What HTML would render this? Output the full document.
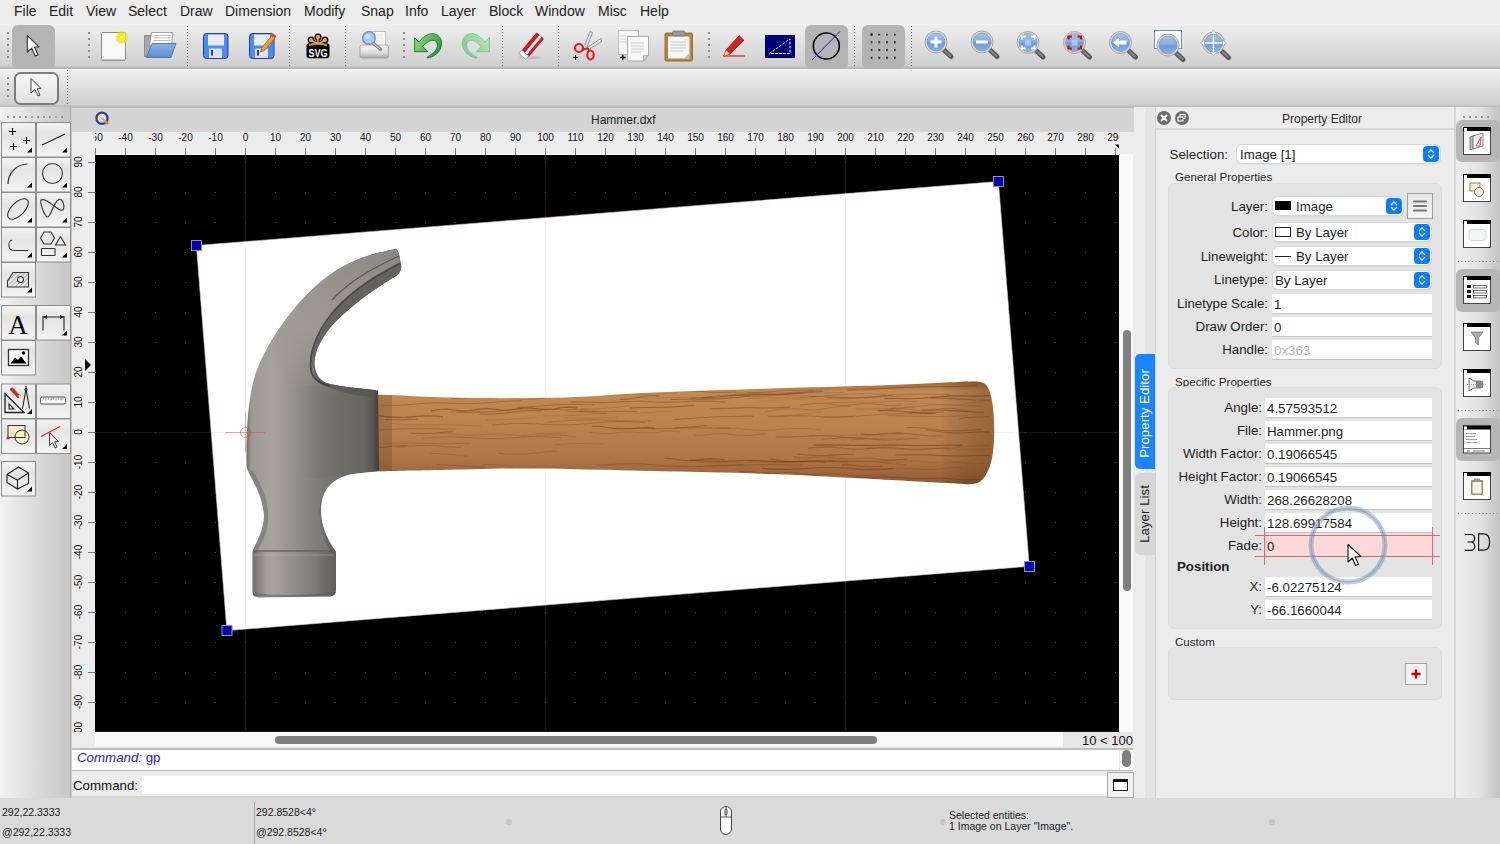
<!DOCTYPE html>
<html><head><meta charset="utf-8">
<style>
*{box-sizing:border-box;margin:0;padding:0}
html,body{width:1500px;height:844px;overflow:hidden;background:#ececec;font-family:"Liberation Sans",sans-serif;color:#1d1d1d;position:relative}
.a{position:absolute}
#menu{left:0;top:0;width:1500px;height:24px;background:#ececec}
#menu span{position:absolute;top:3px;font-size:14px;color:#222}
#tb1{left:0;top:24px;width:1500px;height:45px;background:linear-gradient(#f3f3f3 0,#f3f3f3 1px,#eeeeee 1px,#cfcfcf 42px,#b9b9b9 43px,#b9b9b9 45px)}
#tb2{left:0;top:69px;width:1500px;height:39px;background:linear-gradient(#f4f4f4 0,#f4f4f4 1px,#efefef 1px,#cdcdcd 36px,#bbbbbb 37px,#bbbbbb 39px)}
.sep{position:absolute;width:2px;background:radial-gradient(circle,#555 0.6px,transparent 0.9px) 0 0/2px 4px}
#pal{left:0;top:107px;width:70px;height:691px;background:linear-gradient(90deg,#f2f2f2,#c9c9c9)}
#palb{left:70px;top:107px;width:2px;height:691px;background:#bdbdbd}
#ctitle{left:72px;top:108px;width:1062px;height:24px;background:#d4d4d4;font-size:12px;line-height:24px;color:#222;padding-left:519px}
#rtop{left:72px;top:132px;width:1062px;height:23px;background:#ececec;overflow:hidden}
#rleft{left:72px;top:155px;width:23px;height:577px;background:#ececec;overflow:hidden}
#canvas{left:95px;top:155px;width:1024px;height:577px;background:#000;overflow:hidden}
#vscroll{left:1119px;top:155px;width:14px;height:577px;background:#f9f9f9}
#hscroll{left:95px;top:732px;width:968px;height:14px;background:#f9f9f9}
#zoomlbl{left:1063px;top:732px;width:70px;height:16px;background:#e6e6e6;font-size:13px;text-align:right;line-height:17px;color:#111}
#hist{left:72px;top:748px;width:1061px;height:23px;background:#fff;border-top:2px solid #bdbdbd;border-bottom:1px solid #b8b8b8}
#cmd{left:72px;top:771px;width:1061px;height:27px;background:#ececec}
#status{left:0;top:798px;width:1500px;height:46px;background:#dadada}
#rgap1{left:1134px;top:107px;width:11px;height:691px;background:#ececec}
#rgap2{left:1145px;top:107px;width:10px;height:691px;background:#e4e4e4}
#pe{left:1155px;top:107px;width:300px;height:691px;background:#ececec;border-left:1px solid #d0d0d0}
#rtb{left:1455px;top:107px;width:45px;height:691px;background:linear-gradient(90deg,#f0f0f0,#e6e6e6 60%,#c4c4c4)}
</style></head><body>
<div id="menu" class="a">
<span style="left:14px">File</span><span style="left:49px">Edit</span><span style="left:86px">View</span><span style="left:128px">Select</span><span style="left:180px">Draw</span><span style="left:225px">Dimension</span><span style="left:304px">Modify</span><span style="left:361px">Snap</span><span style="left:405px">Info</span><span style="left:441px">Layer</span><span style="left:489px">Block</span><span style="left:535px">Window</span><span style="left:598px">Misc</span><span style="left:640px">Help</span>
</div>
<div id="tb1" class="a"></div>
<div id="tb2" class="a"></div>
<svg class="a" style="left:0;top:24px" width="1500" height="84" viewBox="0 24 1500 84">
<defs>
<pattern id="hdots" x="7" y="32" width="6" height="6" patternUnits="userSpaceOnUse"><rect width="2" height="2" fill="#8a8a8a"/></pattern>
<pattern id="sdots" x="0" y="0" width="3" height="3" patternUnits="userSpaceOnUse"><rect width="1" height="1.4" fill="#6a6a6a"/></pattern>
<linearGradient id="lens" x1="0" y1="0" x2="0" y2="1"><stop offset="0" stop-color="#a8c2e8"/><stop offset="0.48" stop-color="#86aadf"/><stop offset="0.52" stop-color="#6a98d8"/><stop offset="1" stop-color="#80b4ee"/></linearGradient>
<radialGradient id="glow"><stop offset="0" stop-color="#fffff0"/><stop offset="0.3" stop-color="#f4ea20"/><stop offset="0.7" stop-color="#eee020" stop-opacity="0.8"/><stop offset="1" stop-color="#eee020" stop-opacity="0"/></radialGradient>
<linearGradient id="paper" x1="0" y1="0" x2="1" y2="1"><stop offset="0" stop-color="#fff"/><stop offset="1" stop-color="#dcdcdc"/></linearGradient>
<linearGradient id="fold" x1="0" y1="0" x2="0" y2="1"><stop offset="0" stop-color="#8ab4e4"/><stop offset="1" stop-color="#5a8ed4"/></linearGradient>
<linearGradient id="green" x1="0" y1="0" x2="1" y2="0.6"><stop offset="0" stop-color="#9ede80"/><stop offset="1" stop-color="#2a9a40"/></linearGradient>
<linearGradient id="lgreen" x1="0" y1="0" x2="1" y2="0.6"><stop offset="0" stop-color="#c0e8b8"/><stop offset="1" stop-color="#88c898"/></linearGradient>
<g id="mag"><path d="M8 8L15 14.5" stroke="#555" stroke-width="5" stroke-linecap="round"/><path d="M9 9L14.5 14" stroke="#8a8a8a" stroke-width="1.8" stroke-linecap="round"/><circle r="11" fill="#d8d8d0" stroke="#a8a8a0" stroke-width="1"/><circle r="9" fill="url(#lens)" stroke="#7090c0" stroke-width="0.6"/></g>
</defs>
<!-- toolbar 1 -->
<path d="M8.0 32.0V58.0" stroke="#8a8a8a" stroke-width="2" stroke-dasharray="2 4"/>
<rect x="12" y="25" width="43" height="44" rx="6" fill="#b4b4b4"/>
<path d="M27.3 35.7V52.2L31.8 48.2L35.3 56L38 54.8L34.6 47.3L39 46.8Z" fill="#fff" stroke="#333" stroke-width="1.1" stroke-linejoin="round"/>
<path d="M89.0 32.0V58.0" stroke="#8a8a8a" stroke-width="2" stroke-dasharray="2 4"/>
<!-- new -->
<rect x="101.5" y="32.5" width="24" height="27.5" rx="0.8" fill="#f8f8f8" stroke="#8c8c8c" stroke-width="1"/>
<path d="M102 60.5h23" stroke="#999" stroke-width="1"/>
<circle cx="121.8" cy="37.5" r="7" fill="url(#glow)"/>
<path d="M187.5 26.0V67.0" stroke="#6a6a6a" stroke-width="1" stroke-dasharray="1 2"/>
<!-- open -->
<path d="M144.5 35.5h8v21h-8z" fill="#a8a8a8" stroke="#777" stroke-width="0.7"/>
<path d="M151.5 32.5h21.5l-1.5 13h-22z" fill="#fbfbfb" stroke="#8a8a8a" stroke-width="0.8"/>
<path d="M154 35.5h17M153.5 38h17M153.5 40.5h17" stroke="#c0c0c0" stroke-width="1"/>
<path d="M152 43.5H176L171 57.5H146.5Z" fill="url(#fold)" stroke="#3a6ab0" stroke-width="0.8"/>
<!-- save -->
<g id="save"><rect x="203.5" y="33.5" width="24.5" height="25" rx="3" fill="#4c8cf0" stroke="#2a3aa0" stroke-width="1"/>
<rect x="208" y="34.5" width="16" height="11" fill="#e8ecf8"/>
<rect x="209" y="48.5" width="13" height="9.5" fill="#dde0e8"/><rect x="211" y="50" width="2" height="5.5" fill="#1a3ac8"/></g>
<use href="#save" x="46"/>
<path d="M272 35.5l3 2.5-10.5 12.5-4 1.5 1-4z" fill="#f6a020" stroke="#b05a10" stroke-width="0.8"/>
<path d="M272 35.5l3 2.5 1.5-1.8-3-2.5z" fill="#e04040"/>
<path d="M289.5 26.0V67.0" stroke="#6a6a6a" stroke-width="1" stroke-dasharray="1 2"/>
<!-- svg -->
<g stroke="#000" stroke-width="1.6">
<path d="M318 44L318 37M318 44L311 40M318 44L325 40M318 44L308 45M318 44L328 45" stroke-width="3.2"/>
<circle cx="318" cy="37" r="2.8" fill="#f5a623"/><circle cx="311" cy="40" r="2.6" fill="#f5a623"/><circle cx="325" cy="40" r="2.6" fill="#f5a623"/>
</g>
<path d="M306.5 45.5Q306.5 43.5 309 43.5H327Q329.5 43.5 329.5 45.5V55.5Q329.5 58.3 326.5 58.3H309.5Q306.5 58.3 306.5 55.5Z" fill="#000"/>
<path d="M309 45.3Q318 42 327 45.3" stroke="#f5a623" stroke-width="1.6" fill="none"/>
<path d="M318 44L318 37M318 44L311 40M318 44L325 40" stroke="#f5a623" stroke-width="1.6"/>
<circle cx="318" cy="37" r="2.1" fill="#f5a623"/><circle cx="311" cy="40" r="1.9" fill="#f5a623"/><circle cx="325" cy="40" r="1.9" fill="#f5a623"/>
<text x="318" y="57" font-size="11" font-weight="bold" fill="#fff" text-anchor="middle" font-family="Liberation Sans" textLength="19" lengthAdjust="spacingAndGlyphs">SVG</text>
<path d="M345.5 26.0V67.0" stroke="#6a6a6a" stroke-width="1" stroke-dasharray="1 2"/>
<!-- print preview -->
<linearGradient id="prg" x1="0" y1="0" x2="0" y2="1"><stop offset="0" stop-color="#f4f4f4"/><stop offset="0.6" stop-color="#dcdcdc"/><stop offset="1" stop-color="#a8a8a8"/></linearGradient>
<rect x="367.5" y="31.5" width="18" height="16" fill="#f8f8f8" stroke="#b4b4b4" stroke-width="0.8"/>
<path d="M370 35h13M370 38h13M370 41h13" stroke="#d8d8d8" stroke-width="0.8"/>
<path d="M362 45h24.5q2 0 2 2v9q0 2-2 2h-24.5q-2 0-2-2v-9q0-2 2-2z" fill="url(#prg)" stroke="#9a9a9a" stroke-width="0.8"/>
<path d="M362 49h24" stroke="#fff" stroke-width="0.8" opacity="0.7"/>
<path d="M372 42L380.5 49.5" stroke="#888" stroke-width="3.2" stroke-linecap="round"/>
<path d="M372.5 42.5L380 49" stroke="#ddd" stroke-width="1" stroke-linecap="round"/>
<circle cx="369" cy="38" r="6.3" fill="#a8c8ee" stroke="#6a8ec4" stroke-width="1.3"/>
<circle cx="367.5" cy="36.5" r="2.5" fill="#d4e4f8" opacity="0.8"/>
<path d="M404.0 32.0V58.0" stroke="#8a8a8a" stroke-width="2" stroke-dasharray="2 4"/>
<!-- undo -->
<path id="undo" d="M414.6 37.6L418.8 42.1C423 37 428 33.7 432 33.7C438 33.7 442 38 441.6 44C441 52 434 57.5 427 58L427.5 56.8C433 54 437.5 50 437.4 45C437.4 42 435.5 40.3 433 40.3C429 40.3 425.5 43.5 422.7 46.3L427.8 51.7L414.6 51.7Z" fill="url(#green)" stroke="#17782c" stroke-width="0.9" stroke-linejoin="round"/>
<!-- redo -->
<path d="M414.6 37.6L418.8 42.1C423 37 428 33.7 432 33.7C438 33.7 442 38 441.6 44C441 52 434 57.5 427 58L427.5 56.8C433 54 437.5 50 437.4 45C437.4 42 435.5 40.3 433 40.3C429 40.3 425.5 43.5 422.7 46.3L427.8 51.7L414.6 51.7Z" transform="translate(904 0) scale(-1 1)" fill="url(#lgreen)" stroke="#7cbf8a" stroke-width="0.9" stroke-linejoin="round"/>
<path d="M502.5 26.0V67.0" stroke="#6a6a6a" stroke-width="1" stroke-dasharray="1 2"/>
<!-- eraser -->
<ellipse cx="530" cy="57.5" rx="11" ry="1.6" fill="#aaa" opacity="0.5"/>
<path d="M536.5 33l7 5.8-14.5 17.5-7-5.8z" fill="#d81818" stroke="#901010" stroke-width="0.7"/>
<path d="M539.3 35.3l2.2 1.8-14.5 17.5-2.2-1.8z" fill="#fff"/>
<path d="M521.5 50l7.2 6-2.8 3.3-7.2-6z" fill="#f4f4f4" stroke="#888" stroke-width="0.7"/>
<path d="M558.5 26.0V67.0" stroke="#6a6a6a" stroke-width="1" stroke-dasharray="1 2"/>
<!-- cut -->
<path d="M585 45L590 31.5L592.5 32.5L587 47M588 47L601 38.5L601.5 41.5L589.5 49" fill="#eee" stroke="#777" stroke-width="0.8"/>
<circle cx="579" cy="48" r="4" fill="none" stroke="#e02020" stroke-width="2.2"/>
<ellipse cx="590.5" cy="55" rx="3.2" ry="4.5" fill="none" stroke="#e02020" stroke-width="2.2"/>
<path d="M582 50L588 48M589 51L588 48" stroke="#e02020" stroke-width="2"/>
<path d="M573 57.5h5M575.5 55v5" stroke="#000" stroke-width="1.2"/>
<!-- copy -->
<path d="M618.5 30.5h20v24h-20z" fill="#f6f6f6" stroke="#b0b0b0" stroke-width="0.8"/>
<path d="M620 36H630M620 39H630M620 42H630" stroke="#ccc" stroke-width="0.7"/>
<path d="M627.5 36.5h21v19l-5 5.5h-16z" fill="#f8f8f8" stroke="#999" stroke-width="0.8"/>
<path d="M648.5 55.5l-5 5.5v-5.5z" fill="#d0d0d0" stroke="#999" stroke-width="0.6"/>
<path d="M631 43h13M631 46h13M631 49h13M631 52h10" stroke="#c4c4c4" stroke-width="0.9"/>
<path d="M620 57.5h5.5M622.75 54.75v5.5" stroke="#000" stroke-width="1.3"/>
<!-- paste -->
<rect x="665" y="33" width="27.5" height="28" rx="1.5" fill="#b88440" stroke="#8a5a20" stroke-width="0.8"/>
<rect x="668" y="36.5" width="21.5" height="22" fill="#f6f6f6"/>
<path d="M671 42h15M671 45h15M671 48h15M671 51h12" stroke="#bbb" stroke-width="0.8"/>
<path d="M684 58.5l5.5-5.5v5.5z" fill="#bbb"/>
<rect x="672.5" y="31" width="12.5" height="5" rx="1.5" fill="#9a9a9a" stroke="#666" stroke-width="0.6"/>
<path d="M709.0 32.0V58.0" stroke="#8a8a8a" stroke-width="2" stroke-dasharray="2 4"/>
<!-- pencil -->
<path d="M723 56H745" stroke="#e01818" stroke-width="1.2"/>
<path d="M739.5 35.5l4.5 4.5-14 14-6 2 2-6z" fill="#d82020" stroke="#801010" stroke-width="0.8"/>
<path d="M739.5 35.5l4.5 4.5 1.2-1.2-4.5-4.5z" fill="#ddd"/>
<path d="M726 50l4 4-6 2z" fill="#f0c890"/>
<!-- blue rect -->
<rect x="765.5" y="35.5" width="29" height="22" fill="#00007a" stroke="#000040" stroke-width="1"/>
<path d="M769.5 53.5L790 39V53.5Z" fill="none" stroke="#fff" stroke-width="1" stroke-dasharray="2.5 1.5"/>
<!-- circle selected -->
<rect x="805" y="25" width="43" height="44" rx="6" fill="#b4b4b4"/>
<circle cx="826.3" cy="46" r="13" fill="none" stroke="#000" stroke-width="1.6"/>
<path d="M812 60L840 31.5" stroke="#1a1af0" stroke-width="1"/>
<path d="M854.5 26.0V67.0" stroke="#6a6a6a" stroke-width="1" stroke-dasharray="1 2"/>
<!-- grid selected -->
<rect x="862" y="25" width="43" height="44" rx="6" fill="#b4b4b4"/>
<g fill="#111"><rect x="870.5" y="33.5" width="2" height="2"/></g>
<pattern id="gdots" x="870.5" y="33.5" width="7.8" height="7.8" patternUnits="userSpaceOnUse"><rect width="1.8" height="1.8" fill="#111"/></pattern>
<rect x="870.5" y="33.5" width="26" height="26" fill="url(#gdots)"/>
<path d="M911.5 26.0V67.0" stroke="#6a6a6a" stroke-width="1" stroke-dasharray="1 2"/>
<!-- zoom in/out -->
<use href="#mag" x="936" y="42"/>
<path d="M930.5 42h11M936 36.5v11" stroke="#fff" stroke-width="3"/>
<use href="#mag" x="982" y="42"/>
<path d="M976 42h12" stroke="#fff" stroke-width="3"/>
<use href="#mag" x="1028" y="42.5"/>
<path d="M1022 39.5v-3h3.5M1031 36.5h3.5v3M1034.5 45.5v3h-3.5M1025.5 48.5h-3.5v-3" stroke="#fff" stroke-width="1.8" fill="none"/>
<rect x="1025" y="39.5" width="6" height="6" fill="#a8c8f0"/>
<use href="#mag" x="1074.5" y="42.5"/>
<path d="M1068.5 39.5v-3h3.5M1077.5 36.5h3.5v3M1081 45.5v3h-3.5M1072 48.5h-3.5v-3" stroke="#e00000" stroke-width="2.2" fill="none"/>
<rect x="1071.5" y="39.5" width="6" height="6" fill="#a8c8f0"/>
<use href="#mag" x="1120.5" y="42.5"/>
<path d="M1113 42.5l6-5v3h7.5v4h-7.5v3z" fill="#fff"/>
<rect x="1154.5" y="30.5" width="27" height="18" fill="#fff" stroke="#6a8ac8" stroke-width="1"/>
<use href="#mag" x="1168" y="45"/>
<use href="#mag" x="1213.5" y="43"/>
<path d="M1213.5 31v24M1201.5 43h24" stroke="#fff" stroke-width="1.5"/>
<path d="M1213.5 30l-3 4h6zM1213.5 56l-3-4h6zM1200.5 43l4-3v6zM1226.5 43l-4-3v6z" fill="#fff" stroke="#6a8ac8" stroke-width="0.5"/>
<!-- toolbar 2 -->
<path d="M8.0 77.0V97.0" stroke="#8a8a8a" stroke-width="2" stroke-dasharray="2 4"/>
<linearGradient id="b2g" x1="0" y1="0" x2="0" y2="1"><stop offset="0" stop-color="#f6f6f6"/><stop offset="0.5" stop-color="#ececec"/><stop offset="1" stop-color="#e0e0e0"/></linearGradient><rect x="15" y="73" width="43" height="31" rx="5.5" fill="url(#b2g)" stroke="#7c7c7c" stroke-width="2"/>
<path d="M31 78.5V93L35 89.5L38 96L40 95.2L37.2 88.8L41 88.5Z" fill="#fff" stroke="#444" stroke-width="1" stroke-linejoin="round"/>
<path d="M67.5 70.0V106.0" stroke="#6a6a6a" stroke-width="1" stroke-dasharray="1 2"/>
</svg>

<svg class="a" style="left:0;top:107px" width="72" height="691" viewBox="0 107 72 691"><defs><linearGradient id="pbtn" x1="0" y1="0" x2="0" y2="1"><stop offset="0" stop-color="#f4f4f4"/><stop offset="0.35" stop-color="#e4e4e4"/><stop offset="1" stop-color="#f4f4f4"/></linearGradient><linearGradient id="pbg" x1="0" y1="0" x2="1" y2="0"><stop offset="0" stop-color="#f2f2f2"/><stop offset="1" stop-color="#c6c6c6"/></linearGradient></defs><rect x="0" y="107" width="70" height="691" fill="url(#pbg)"/><rect x="70" y="107" width="2" height="691" fill="#c8c8c8"/><rect x="70" y="107" width="1" height="691" fill="#b4b4b4"/><path d="M7 117H64" stroke="#9a9a9a" stroke-width="2" stroke-dasharray="2 4"/><rect x="1.5" y="122.5" width="34" height="34.5" fill="url(#pbtn)" stroke="#8c8c8c" stroke-width="1"/><g transform="translate(1 122)"><path d="M8 9.5h7M11.5 6v7M22 18.5h7M25.5 15v7M9 24.5h7M12.5 21v7" stroke="#000" stroke-width="1.2"/></g><path d="M32 147.5V152.5H27Z" fill="#000"/><rect x="36.5" y="122.5" width="34" height="34.5" fill="url(#pbtn)" stroke="#8c8c8c" stroke-width="1"/><g transform="translate(36 122)"><path d="M6 23L29 12" stroke="#222" stroke-width="1.1"/></g><path d="M67 147.5V152.5H62Z" fill="#000"/><rect x="1.5" y="157.5" width="34" height="34.5" fill="url(#pbtn)" stroke="#8c8c8c" stroke-width="1"/><g transform="translate(1 157)"><path d="M7 27A20 20 0 0 1 26.5 7" stroke="#333" stroke-width="1.2" fill="none"/></g><path d="M32 182.5V187.5H27Z" fill="#000"/><rect x="36.5" y="157.5" width="34" height="34.5" fill="url(#pbtn)" stroke="#8c8c8c" stroke-width="1"/><g transform="translate(36 157)"><circle cx="16.5" cy="16.5" r="10" stroke="#333" stroke-width="1.1" fill="none"/></g><path d="M67 182.5V187.5H62Z" fill="#000"/><rect x="1.5" y="192.5" width="34" height="34.5" fill="url(#pbtn)" stroke="#8c8c8c" stroke-width="1"/><g transform="translate(1 192)"><ellipse cx="17" cy="17" rx="13" ry="6.5" transform="rotate(-45 17 17)" stroke="#333" stroke-width="1.1" fill="none"/></g><path d="M32 217.5V222.5H27Z" fill="#000"/><rect x="36.5" y="192.5" width="34" height="34.5" fill="url(#pbtn)" stroke="#8c8c8c" stroke-width="1"/><g transform="translate(36 192)"><path d="M5 8C9 6 14 11 18 14C22 17 26 20 27.5 17C29 13 26 6 23 7.5C20 9 18 13 16 18C14 23 12 27 10 24C7 20 4 11 5 8Z" stroke="#333" stroke-width="1.1" fill="none"/></g><path d="M67 217.5V222.5H62Z" fill="#000"/><rect x="1.5" y="227.5" width="34" height="34.5" fill="url(#pbtn)" stroke="#8c8c8c" stroke-width="1"/><g transform="translate(1 227)"><path d="M11 13A4 5 0 0 0 8 19A5 5 0 0 0 13 23.5H27" stroke="#333" stroke-width="1.1" fill="none"/></g><path d="M32 252.5V257.5H27Z" fill="#000"/><rect x="36.5" y="227.5" width="34" height="34.5" fill="url(#pbtn)" stroke="#8c8c8c" stroke-width="1"/><g transform="translate(36 227)"><path d="M8 5H15L18.5 11L15 17H8L4.5 11Z" stroke="#333" stroke-width="1.1" fill="none"/><path d="M24.5 9.5L29.5 18H19.5Z" stroke="#333" stroke-width="1.1" fill="none"/><rect x="5.5" y="21.5" width="13.5" height="7" rx="0.5" stroke="#333" stroke-width="1.1" fill="none"/></g><path d="M67 252.5V257.5H62Z" fill="#000"/><rect x="1.5" y="262.5" width="34" height="34.5" fill="url(#pbtn)" stroke="#8c8c8c" stroke-width="1"/><g transform="translate(1 262)"><defs><pattern id="hp" width="3" height="3" patternUnits="userSpaceOnUse" patternTransform="rotate(45)"><path d="M0 0V3" stroke="#555" stroke-width="0.8"/></pattern></defs><path d="M6.5 19L12 10.5H27.5V25H6.5Z" fill="url(#hp)" stroke="#333" stroke-width="1.1"/><circle cx="19.5" cy="17.5" r="3" fill="#eee" stroke="#333" stroke-width="1.1"/></g><path d="M32 287.5V292.5H27Z" fill="#000"/><rect x="1.5" y="305.5" width="34" height="34.5" fill="url(#pbtn)" stroke="#8c8c8c" stroke-width="1"/><g transform="translate(1 305)"><text x="17" y="29" font-family="Liberation Serif" font-size="27" text-anchor="middle" fill="#000">A</text></g><rect x="36.5" y="305.5" width="34" height="34.5" fill="url(#pbtn)" stroke="#8c8c8c" stroke-width="1"/><g transform="translate(36 305)"><path d="M7 11V25.5M28 11V25.5M7 12H28" stroke="#222" stroke-width="1.1"/><path d="M7 12l4-2v4zM28 12l-4-2v4z" fill="#222"/></g><path d="M67 330.5V335.5H62Z" fill="#000"/><rect x="1.5" y="340.5" width="34" height="34.5" fill="url(#pbtn)" stroke="#8c8c8c" stroke-width="1"/><g transform="translate(1 340)"><rect x="7.5" y="9.5" width="20" height="16" fill="#fff" stroke="#333" stroke-width="1.3"/><path d="M9.5 23.5L14 17.5L17 20L20 16.5L25.5 23.5Z" fill="#000"/><circle cx="22.5" cy="13" r="1.8" fill="#000"/></g><rect x="1.5" y="384.0" width="34" height="34.5" fill="url(#pbtn)" stroke="#8c8c8c" stroke-width="1"/><g transform="translate(1 383.5)"><path d="M4 10V29H23Z" fill="none" stroke="#222" stroke-width="1.3"/><path d="M8 20.5V25.5H13Z" fill="none" stroke="#222" stroke-width="1.1"/><path d="M9 6l2.2-2 8 8.5-2.2 2z" fill="#e02020" stroke="#801010" stroke-width="0.5"/><path d="M17 12.5l2.2-2 0.8 4.5z" fill="#f0c890"/><path d="M25 2.5V5.5M25 5.5L21.5 25M25 5.5L28.5 25" stroke="#222" stroke-width="1.1" fill="none"/><circle cx="25" cy="6" r="1.3" fill="none" stroke="#222"/></g><path d="M32 409.0V414.0H27Z" fill="#000"/><rect x="36.5" y="384.0" width="34" height="34.5" fill="url(#pbtn)" stroke="#8c8c8c" stroke-width="1"/><g transform="translate(36 383.5)"><rect x="4.5" y="13.5" width="25" height="7" rx="1.5" fill="#f8f8f8" stroke="#555" stroke-width="1"/><path d="M7.5 14V16M10 14V17M12.5 14V16M15 14V17M17.5 14V16M20 14V17M22.5 14V16M25 14V17M27 14V16" stroke="#555" stroke-width="0.6"/></g><rect x="1.5" y="419.0" width="34" height="34.5" fill="url(#pbtn)" stroke="#8c8c8c" stroke-width="1"/><g transform="translate(1 418.5)"><circle cx="21" cy="18.5" r="7" fill="#f8f0c8"/><rect x="7" y="7" width="17" height="12" fill="#f8f0c8"/><circle cx="21" cy="18.5" r="7" fill="none" stroke="#333" stroke-width="1"/><rect x="7" y="7" width="17" height="12" fill="none" stroke="#333" stroke-width="1"/><circle cx="7" cy="19.5" r="1.6" fill="#f02020"/></g><rect x="36.5" y="419.0" width="34" height="34.5" fill="url(#pbtn)" stroke="#8c8c8c" stroke-width="1"/><g transform="translate(36 418.5)"><path d="M5 18L24 8" stroke="#e82020" stroke-width="1.1"/><path d="M13.5 14V27L16.5 24L19 29.5L21 28.5L18.7 23.3L22.5 23Z" fill="#eee" stroke="#333" stroke-width="0.9" stroke-linejoin="round"/></g><path d="M67 444.0V449.0H62Z" fill="#000"/><rect x="1.5" y="461.5" width="34" height="34.5" fill="url(#pbtn)" stroke="#8c8c8c" stroke-width="1"/><g transform="translate(1 461)"><path d="M6 13.5L17.5 6L27.5 12V22.5L16.5 28L6 21.5Z" fill="none" stroke="#222" stroke-width="1.1"/><path d="M6 13.5L16.5 19L27.5 12M16.5 19V28" stroke="#222" stroke-width="1.1" fill="none"/></g><path d="M32 486.5V491.5H27Z" fill="#000"/></svg>
<div id="ctitle" class="a">Hammer.dxf</div>
<svg class="a" style="left:94px;top:110px" width="18" height="18"><defs><radialGradient id="dg" cx="0.4" cy="0.35"><stop offset="0" stop-color="#fff"/><stop offset="1" stop-color="#c8d0e0"/></radialGradient></defs><circle cx="8" cy="8.3" r="5.6" fill="url(#dg)" stroke="#2a4090" stroke-width="2.2"/><path d="M5 6.5L8 8.5M8 4.5V8.5" stroke="#d06060" stroke-width="0.5"/><path d="M8 8L13 13" stroke="#e8b020" stroke-width="2.2"/><path d="M12.5 12.5L14 14" stroke="#e06060" stroke-width="2"/></svg>
<svg class="a" style="left:72px;top:132px" width="1062" height="23" viewBox="72 132 1062 23"><rect x="72" y="132" width="1062" height="23" fill="#ececec"/><rect x="95" y="154" width="1039" height="1" fill="#f8f8f8"/><path d="M95.5 148V155M125.5 148V155M155.5 148V155M185.5 148V155M215.5 148V155M245.5 148V155M275.5 148V155M305.5 148V155M335.5 148V155M365.5 148V155M395.5 148V155M425.5 148V155M455.5 148V155M485.5 148V155M515.5 148V155M545.5 148V155M575.5 148V155M605.5 148V155M635.5 148V155M665.5 148V155M695.5 148V155M725.5 148V155M755.5 148V155M785.5 148V155M815.5 148V155M845.5 148V155M875.5 148V155M905.5 148V155M935.5 148V155M965.5 148V155M995.5 148V155M1025.5 148V155M1055.5 148V155M1085.5 148V155M1115.5 148V155" stroke="#7a7a7a" stroke-width="1"/><svg x="95" y="132" width="1024" height="23" viewBox="95 132 1024 23"><g font-size="10" text-anchor="middle" fill="#111"><text x="95.5" y="141">-50</text><text x="125.5" y="141">-40</text><text x="155.5" y="141">-30</text><text x="185.5" y="141">-20</text><text x="215.5" y="141">-10</text><text x="245.5" y="141">0</text><text x="275.5" y="141">10</text><text x="305.5" y="141">20</text><text x="335.5" y="141">30</text><text x="365.5" y="141">40</text><text x="395.5" y="141">50</text><text x="425.5" y="141">60</text><text x="455.5" y="141">70</text><text x="485.5" y="141">80</text><text x="515.5" y="141">90</text><text x="545.5" y="141">100</text><text x="575.5" y="141">110</text><text x="605.5" y="141">120</text><text x="635.5" y="141">130</text><text x="665.5" y="141">140</text><text x="695.5" y="141">150</text><text x="725.5" y="141">160</text><text x="755.5" y="141">170</text><text x="785.5" y="141">180</text><text x="815.5" y="141">190</text><text x="845.5" y="141">200</text><text x="875.5" y="141">210</text><text x="905.5" y="141">220</text><text x="935.5" y="141">230</text><text x="965.5" y="141">240</text><text x="995.5" y="141">250</text><text x="1025.5" y="141">260</text><text x="1055.5" y="141">270</text><text x="1085.5" y="141">280</text><text x="1115.5" y="141">290</text></g></svg><path d="M1115.5 148V155" stroke="#7a7a7a"/><path d="M1115 144.5h4v4z" fill="#111"/></svg>
<svg class="a" style="left:72px;top:155px" width="23" height="577" viewBox="72 155 23 577"><rect x="72" y="155" width="23" height="577" fill="#ececec"/><path d="M88 732.5H95M88 702.5H95M88 672.5H95M88 642.5H95M88 612.5H95M88 582.5H95M88 552.5H95M88 522.5H95M88 492.5H95M88 462.5H95M88 432.5H95M88 402.5H95M88 372.5H95M88 342.5H95M88 312.5H95M88 282.5H95M88 252.5H95M88 222.5H95M88 192.5H95M88 162.5H95" stroke="#7a7a7a" stroke-width="1"/><g font-size="10" text-anchor="middle" fill="#111"><text transform="translate(82 732) rotate(-90)" y="0">-100</text><text transform="translate(82 702) rotate(-90)" y="0">-90</text><text transform="translate(82 672) rotate(-90)" y="0">-80</text><text transform="translate(82 642) rotate(-90)" y="0">-70</text><text transform="translate(82 612) rotate(-90)" y="0">-60</text><text transform="translate(82 582) rotate(-90)" y="0">-50</text><text transform="translate(82 552) rotate(-90)" y="0">-40</text><text transform="translate(82 522) rotate(-90)" y="0">-30</text><text transform="translate(82 492) rotate(-90)" y="0">-20</text><text transform="translate(82 462) rotate(-90)" y="0">-10</text><text transform="translate(82 432) rotate(-90)" y="0">0</text><text transform="translate(82 402) rotate(-90)" y="0">10</text><text transform="translate(82 372) rotate(-90)" y="0">20</text><text transform="translate(82 342) rotate(-90)" y="0">30</text><text transform="translate(82 312) rotate(-90)" y="0">40</text><text transform="translate(82 282) rotate(-90)" y="0">50</text><text transform="translate(82 252) rotate(-90)" y="0">60</text><text transform="translate(82 222) rotate(-90)" y="0">70</text><text transform="translate(82 192) rotate(-90)" y="0">80</text><text transform="translate(82 162) rotate(-90)" y="0">90</text></g><path d="M85 359v12l6-6z" fill="#111"/></svg>

<svg class="a" style="left:95px;top:155px" width="1024" height="577" viewBox="95 155 1024 577">
<defs>
<pattern id="dots" x="5" y="12" width="30" height="30" patternUnits="userSpaceOnUse"><rect x="0" y="0" width="1" height="1" fill="#444"/></pattern>
<linearGradient id="metal" x1="246" y1="0" x2="380" y2="0" gradientUnits="userSpaceOnUse">
<stop offset="0" stop-color="#6a6964"/><stop offset="0.04" stop-color="#9c9a93"/><stop offset="0.2" stop-color="#a6a49d"/><stop offset="0.4" stop-color="#8e8c86"/><stop offset="0.6" stop-color="#797772"/><stop offset="0.9" stop-color="#6e6d68"/><stop offset="1" stop-color="#4a4945"/></linearGradient>
<linearGradient id="clawg" x1="260" y1="390" x2="400" y2="250" gradientUnits="userSpaceOnUse">
<stop offset="0" stop-color="#a4a29b"/><stop offset="0.5" stop-color="#9a9891"/><stop offset="1" stop-color="#8a8882"/></linearGradient>
<linearGradient id="wood" x1="0" y1="381" x2="0" y2="484" gradientUnits="userSpaceOnUse">
<stop offset="0" stop-color="#9a6638"/><stop offset="0.1" stop-color="#c08a56"/><stop offset="0.4" stop-color="#bd8250"/><stop offset="0.75" stop-color="#b07645"/><stop offset="0.95" stop-color="#976038"/><stop offset="1" stop-color="#875532"/></linearGradient>
<linearGradient id="capg" x1="940" y1="0" x2="994" y2="0" gradientUnits="userSpaceOnUse">
<stop offset="0" stop-color="#000" stop-opacity="0"/><stop offset="1" stop-color="#5a3010" stop-opacity="0.35"/></linearGradient>
<linearGradient id="blk" x1="300" y1="0" x2="380" y2="0" gradientUnits="userSpaceOnUse"><stop offset="0" stop-color="#55544f" stop-opacity="0"/><stop offset="0.5" stop-color="#55544f" stop-opacity="0.2"/><stop offset="0.9" stop-color="#45443f" stop-opacity="0.25"/><stop offset="1" stop-color="#33322f" stop-opacity="0.6"/></linearGradient>
<linearGradient id="lft" x1="240" y1="0" x2="275" y2="0" gradientUnits="userSpaceOnUse"><stop offset="0" stop-color="#3a3936" stop-opacity="0.45"/><stop offset="1" stop-color="#3a3936" stop-opacity="0"/></linearGradient>
<linearGradient id="facel" x1="252" y1="0" x2="336" y2="0" gradientUnits="userSpaceOnUse"><stop offset="0" stop-color="#3a3936" stop-opacity="0.45"/><stop offset="0.18" stop-color="#3a3936" stop-opacity="0"/><stop offset="0.75" stop-color="#3a3936" stop-opacity="0.05"/><stop offset="1" stop-color="#3a3936" stop-opacity="0.35"/></linearGradient>
</defs>
<rect x="95" y="155" width="1024" height="577" fill="#000"/>
<path d="M245.5 155V732M545.5 155V732M845.5 155V732M95 432.5H1119M95 731.5H1119" stroke="#161616" stroke-width="1.5"/>
<rect x="95" y="155" width="1024" height="577" fill="url(#dots)"/>
<path d="M196.4 245.5L998.4 181.5L1029.3 566.3L226.9 630.6Z" fill="#fff" stroke="#e8c8c8" stroke-width="0.6"/>
<path d="M245.5 246V631M545.5 222V607M845.5 198V583M199 432.5H1014" stroke="#000" stroke-opacity="0.05" stroke-width="1"/>
<path d="M372 395C380.0 394.4 402.7 395.8 420.0 396.5C437.3 397.2 451.8 397.8 476.0 398.0C500.2 398.2 535.3 398.4 565.0 397.5C594.7 396.6 619.5 394.0 654.0 392.5C688.5 391.0 732.5 389.8 772.0 388.5C811.5 387.2 858.5 386.2 891.0 385.0C923.5 383.8 954.3 382.1 967.0 381.5C970.2 382.2 982.0 379.9 986.5 385.6C991.0 391.3 992.8 403.4 993.7 415.5C994.6 427.6 994.3 447.0 992.0 458.0C989.7 469.0 985.5 477.3 980.0 481.6C974.5 485.9 962.2 483.4 958.7 483.7C947.4 483.1 922.1 481.6 891.0 480.0C859.9 478.4 811.5 475.5 772.0 474.0C732.5 472.5 693.5 471.9 654.0 471.0C614.5 470.1 570.7 468.7 535.0 468.5C499.3 468.3 467.2 469.5 440.0 470.0C412.8 470.5 383.3 471.2 372.0 471.5Z" fill="url(#wood)"/>
<g clip-path="url(#hclip)"><path d="M554.3 445.1 L561.4 444.3 L568.5 443.8 L575.6 443.6 L582.6 443.6 L589.7 443.8 L596.8 443.9 L603.9 443.6" stroke="#7a4216" stroke-width="1.0" fill="none" opacity="0.26"/><path d="M620.2 399.5 L628.0 399.1 L635.8 397.8 L643.6 396.3 L651.5 395.7 L659.3 396.0" stroke="#7a4216" stroke-width="1.0" fill="none" opacity="0.58"/><path d="M706.3 473.4 L713.7 473.7 L721.1 474.4 L728.5 475.1 L735.9 475.4 L743.3 475.0 L750.8 474.2 L758.2 473.4 L765.6 473.0 L773.0 473.2 L780.4 473.9 L787.8 474.6" stroke="#7a4216" stroke-width="0.7" fill="none" opacity="0.36"/><path d="M849.7 440.3 L857.3 439.6 L865.0 439.0 L872.6 438.5 L880.2 438.4 L887.9 438.3 L895.5 438.4 L903.2 438.3" stroke="#7a4216" stroke-width="0.6" fill="none" opacity="0.32"/><path d="M768.2 416.6 L776.0 416.7 L783.8 416.4 L791.6 416.0 L799.4 415.6 L807.1 415.7 L814.9 416.2 L822.7 416.9 L830.5 417.3 L838.3 417.4 L846.0 417.0 L853.8 416.6" stroke="#7a4216" stroke-width="1.1" fill="none" opacity="0.34"/><path d="M704.7 466.2 L712.2 466.1 L719.8 465.9 L727.3 465.7 L734.9 465.4 L742.5 465.1 L750.0 464.8 L757.6 464.6 L765.1 464.5 L772.7 464.6 L780.3 464.7 L787.8 464.8 L795.4 465.0 L802.9 465.2" stroke="#7a4216" stroke-width="0.9" fill="none" opacity="0.51"/><path d="M451.2 398.8 L459.0 398.5 L466.8 398.0 L474.6 397.4 L482.4 397.1 L490.2 397.0 L498.0 397.3 L505.8 397.9 L513.6 398.5 L521.4 399.0 L529.2 399.1 L537.0 398.9 L544.8 398.4" stroke="#7a4216" stroke-width="0.8" fill="none" opacity="0.49"/><path d="M716.6 428.1 L724.1 427.8 L731.7 428.0 L739.2 428.6 L746.7 429.4 L754.3 430.1 L761.8 430.4 L769.3 430.2 L776.8 429.7 L784.4 429.0 L791.9 428.4 L799.4 428.3 L807.0 428.6 L814.5 429.3 L822.0 430.0" stroke="#7a4216" stroke-width="0.6" fill="none" opacity="0.50"/><path d="M748.3 461.1 L756.2 461.4 L764.2 461.7 L772.1 462.0 L780.1 462.0 L788.1 461.8 L796.0 461.4 L804.0 461.0 L811.9 460.7 L819.9 460.5 L827.8 460.5 L835.8 460.7 L843.7 461.0 L851.7 461.3 L859.6 461.5 L867.6 461.5 L875.6 461.3 L883.5 460.9 L891.5 460.5 L899.4 460.2 L907.4 460.0" stroke="#7a4216" stroke-width="0.9" fill="none" opacity="0.31"/><path d="M430.3 453.4 L437.8 453.6 L445.3 454.0 L452.9 454.6 L460.4 455.4 L467.9 456.3" stroke="#7a4216" stroke-width="0.7" fill="none" opacity="0.41"/><path d="M689.7 460.1 L697.3 460.4 L704.9 460.9 L712.5 461.2 L720.2 461.3 L727.8 461.1 L735.4 460.8 L743.0 460.5 L750.6 460.4 L758.3 460.5 L765.9 460.9 L773.5 461.3 L781.1 461.6 L788.8 461.7 L796.4 461.6 L804.0 461.3 L811.6 461.0 L819.3 460.9 L826.9 461.0 L834.5 461.3" stroke="#7a4216" stroke-width="1.2" fill="none" opacity="0.59"/><path d="M450.6 411.9 L458.1 411.8 L465.7 411.9 L473.2 412.0 L480.8 412.0 L488.3 411.9 L495.9 411.5 L503.5 410.9" stroke="#7a4216" stroke-width="0.6" fill="none" opacity="0.40"/><path d="M581.6 469.5 L589.5 469.7 L597.5 470.1 L605.5 470.7 L613.4 471.4 L621.4 472.0 L629.4 472.3 L637.3 472.4 L645.3 472.3 L653.3 472.1 L661.3 471.9 L669.2 471.9 L677.2 472.2 L685.2 472.8" stroke="#7a4216" stroke-width="0.6" fill="none" opacity="0.56"/><path d="M828.0 459.9 L836.0 460.7 L843.9 461.2 L851.9 461.0 L859.9 460.5 L867.9 460.3 L875.9 460.8 L883.9 461.6 L891.8 462.0 L899.8 461.8 L907.8 461.3 L915.8 461.1 L923.8 461.6 L931.8 462.4 L939.7 462.8 L947.7 462.6 L955.7 462.0 L963.7 461.9 L971.7 462.5" stroke="#7a4216" stroke-width="0.6" fill="none" opacity="0.27"/><path d="M485.3 420.4 L492.6 419.9 L499.9 419.7 L507.2 419.6 L514.5 419.3 L521.8 418.8 L529.1 418.2 L536.4 417.6" stroke="#7a4216" stroke-width="0.9" fill="none" opacity="0.26"/><path d="M884.6 398.5 L892.1 398.4 L899.7 398.5 L907.2 398.6 L914.7 398.5 L922.2 398.2 L929.8 397.6 L937.3 396.9 L944.8 396.3 L952.4 395.9 L959.9 395.9 L967.4 396.0 L974.9 396.1 L982.5 396.0 L990.0 395.6" stroke="#7a4216" stroke-width="1.2" fill="none" opacity="0.60"/><path d="M639.6 397.9 L647.3 398.4 L655.1 398.5 L662.8 398.2 L670.6 397.7 L678.3 397.4 L686.0 397.4 L693.8 397.7 L701.5 398.3 L709.3 398.6 L717.0 398.5 L724.8 398.1 L732.5 397.6" stroke="#7a4216" stroke-width="0.7" fill="none" opacity="0.26"/><path d="M930.6 397.9 L938.0 398.1 L945.4 398.3 L952.9 398.7 L960.3 399.1 L967.7 399.5 L975.1 399.9 L982.6 400.1 L990.0 400.2" stroke="#7a4216" stroke-width="1.2" fill="none" opacity="0.49"/><path d="M516.7 407.4 L524.4 407.1 L532.2 406.6 L540.0 406.1 L547.7 405.4 L555.5 404.9 L563.3 404.5 L571.0 404.3 L578.8 404.3 L586.6 404.5 L594.3 404.7" stroke="#7a4216" stroke-width="0.8" fill="none" opacity="0.53"/><path d="M951.0 461.6 L958.8 462.4 L966.6 463.3 L974.4 463.8 L982.2 463.6 L990.0 462.9" stroke="#7a4216" stroke-width="0.8" fill="none" opacity="0.26"/><path d="M376.8 415.4 L384.1 416.3 L391.5 417.0 L398.9 417.3 L406.2 417.2 L413.6 416.7 L421.0 416.2 L428.3 415.9 L435.7 416.1 L443.1 416.8" stroke="#7a4216" stroke-width="1.3" fill="none" opacity="0.58"/><path d="M578.8 410.9 L586.1 411.2 L593.4 411.4 L600.8 411.5 L608.1 411.5 L615.4 411.4 L622.8 411.4 L630.1 411.5 L637.4 411.7" stroke="#7a4216" stroke-width="1.2" fill="none" opacity="0.42"/><path d="M751.8 395.0 L759.7 394.5 L767.5 394.3 L775.4 394.4 L783.3 394.8 L791.2 395.3 L799.1 395.8 L806.9 396.1 L814.8 396.2 L822.7 396.0 L830.6 395.5 L838.5 394.9 L846.3 394.2 L854.2 393.8 L862.1 393.6 L870.0 393.7 L877.9 394.0 L885.7 394.5" stroke="#7a4216" stroke-width="0.9" fill="none" opacity="0.31"/><path d="M833.5 461.2 L840.8 461.6 L848.1 461.6 L855.4 461.6 L862.8 461.5 L870.1 461.7 L877.4 462.2 L884.7 462.9 L892.1 463.7 L899.4 464.4 L906.7 464.8" stroke="#7a4216" stroke-width="1.1" fill="none" opacity="0.31"/><path d="M436.2 464.3 L443.3 464.8 L450.4 465.2 L457.5 465.5 L464.6 465.9 L471.7 466.2 L478.8 466.6 L485.9 467.2" stroke="#7a4216" stroke-width="1.1" fill="none" opacity="0.37"/><path d="M689.2 390.3 L697.0 391.1 L704.9 391.8 L712.7 392.3 L720.5 392.4 L728.4 392.3 L736.2 392.0" stroke="#7a4216" stroke-width="0.9" fill="none" opacity="0.56"/><path d="M855.7 408.8 L862.9 408.8 L870.1 408.8 L877.2 408.8 L884.4 408.7 L891.6 408.4 L898.8 408.0 L905.9 407.5 L913.1 407.0" stroke="#7a4216" stroke-width="0.9" fill="none" opacity="0.30"/><path d="M906.0 427.7 L913.6 427.6 L921.2 428.0 L928.8 428.8 L936.4 429.8 L944.0 430.6 L951.6 431.0 L959.2 430.8 L966.8 430.3 L974.4 429.8 L982.0 429.7" stroke="#7a4216" stroke-width="1.0" fill="none" opacity="0.44"/><path d="M674.1 428.0 L680.6 427.6 L687.1 427.1 L693.6 426.6 L700.0 426.1 L706.5 425.5" stroke="#7a4216" stroke-width="0.9" fill="none" opacity="0.50"/><path d="M693.9 435.3 L701.1 435.3 L708.4 434.6 L715.6 433.8 L722.8 433.6 L730.1 434.2 L737.3 435.2 L744.5 435.6 L751.8 435.3 L759.0 434.4 L766.3 433.8" stroke="#7a4216" stroke-width="0.8" fill="none" opacity="0.35"/><path d="M823.4 439.3 L830.7 438.8 L838.1 438.1 L845.5 437.6 L852.9 437.5 L860.3 437.8 L867.7 438.5 L875.1 439.3 L882.4 439.9 L889.8 440.0 L897.2 439.7 L904.6 439.1 L912.0 438.5 L919.4 438.1" stroke="#7a4216" stroke-width="1.0" fill="none" opacity="0.43"/><path d="M775.6 436.8 L783.0 437.0 L790.4 437.0 L797.8 436.7 L805.2 436.3 L812.6 435.9 L820.0 435.8 L827.4 435.9 L834.8 436.3 L842.2 437.0 L849.6 437.8 L857.0 438.5 L864.4 439.1" stroke="#7a4216" stroke-width="1.3" fill="none" opacity="0.34"/><path d="M695.7 462.3 L703.3 462.5 L711.0 462.7 L718.6 462.8 L726.2 462.6 L733.9 462.4 L741.5 462.1 L749.1 461.9 L756.8 461.8 L764.4 462.0 L772.0 462.2 L779.7 462.4 L787.3 462.5 L794.9 462.4 L802.5 462.2 L810.2 461.9 L817.8 461.7 L825.4 461.6 L833.1 461.6 L840.7 461.9 L848.3 462.1" stroke="#7a4216" stroke-width="0.8" fill="none" opacity="0.28"/><path d="M761.7 468.3 L769.4 468.9 L777.2 469.2 L785.0 469.4 L792.7 469.2 L800.5 468.8 L808.2 468.3 L816.0 467.8 L823.8 467.5 L831.5 467.5 L839.3 467.8 L847.0 468.2 L854.8 468.8 L862.6 469.2 L870.3 469.3 L878.1 469.2 L885.8 468.8 L893.6 468.3" stroke="#7a4216" stroke-width="1.2" fill="none" opacity="0.59"/><path d="M491.8 425.2 L499.4 424.5 L507.1 423.9 L514.8 423.5 L522.5 423.4 L530.2 423.6 L537.9 423.9 L545.6 424.4 L553.3 424.7 L561.0 424.9 L568.7 424.9 L576.4 424.5 L584.0 423.9 L591.7 423.2 L599.4 422.5 L607.1 421.9 L614.8 421.6 L622.5 421.6 L630.2 421.8 L637.9 422.2 L645.6 422.6" stroke="#7a4216" stroke-width="0.9" fill="none" opacity="0.43"/><path d="M563.5 418.0 L571.4 418.0 L579.3 418.1 L587.2 418.1 L595.2 418.0 L603.1 417.8 L611.0 417.5 L618.9 417.2" stroke="#7a4216" stroke-width="0.6" fill="none" opacity="0.37"/><path d="M734.4 393.1 L741.8 392.9 L749.2 392.9 L756.6 393.0 L764.1 393.1 L771.5 393.1 L778.9 393.0 L786.4 392.8 L793.8 392.3 L801.2 391.7 L808.7 391.0 L816.1 390.2 L823.5 389.5 L831.0 388.9" stroke="#7a4216" stroke-width="0.8" fill="none" opacity="0.26"/><path d="M827.4 397.7 L834.6 397.9 L841.9 398.2 L849.1 398.3 L856.4 398.2 L863.6 397.9 L870.8 397.4 L878.1 396.7 L885.3 395.9 L892.6 395.1" stroke="#7a4216" stroke-width="0.7" fill="none" opacity="0.57"/><path d="M702.4 397.6 L709.9 397.5 L717.5 397.1 L725.1 396.3 L732.6 395.4 L740.2 394.6 L747.8 394.2 L755.3 394.2 L762.9 394.4 L770.4 394.7 L778.0 394.8 L785.6 394.4 L793.1 393.7 L800.7 392.8 L808.3 392.0 L815.8 391.5 L823.4 391.3" stroke="#7a4216" stroke-width="1.3" fill="none" opacity="0.47"/><path d="M841.0 464.8 L847.8 465.0 L854.6 465.5 L861.4 466.1 L868.2 466.5 L875.0 466.6 L881.9 466.4" stroke="#7a4216" stroke-width="1.0" fill="none" opacity="0.57"/><path d="M520.7 435.5 L528.5 434.7 L536.3 433.9 L544.1 433.5 L551.9 433.4 L559.7 433.3 L567.5 432.9" stroke="#7a4216" stroke-width="0.7" fill="none" opacity="0.36"/><path d="M543.0 416.0 L550.6 416.0 L558.1 416.0 L565.7 415.8 L573.3 415.4 L580.9 414.8 L588.4 414.3 L596.0 413.9 L603.6 413.8 L611.2 413.9 L618.7 413.9 L626.3 413.8 L633.9 413.5 L641.4 413.0 L649.0 412.4 L656.6 411.9 L664.2 411.7 L671.7 411.7" stroke="#7a4216" stroke-width="0.8" fill="none" opacity="0.26"/><path d="M799.8 405.2 L807.7 404.3 L815.5 403.4 L823.3 403.3 L831.1 404.3 L838.9 405.3 L846.8 405.5 L854.6 404.6 L862.4 403.6 L870.2 403.5 L878.0 404.4 L885.8 405.5 L893.7 405.7 L901.5 404.9" stroke="#7a4216" stroke-width="0.9" fill="none" opacity="0.42"/><path d="M860.8 434.1 L868.1 434.6 L875.5 434.5 L882.9 433.9 L890.3 433.3 L897.6 432.9 L905.0 433.2 L912.4 434.0 L919.8 435.0 L927.1 435.8 L934.5 436.1 L941.9 435.8" stroke="#7a4216" stroke-width="1.1" fill="none" opacity="0.47"/><path d="M602.8 395.6 L610.3 395.3 L617.9 395.0 L625.4 394.9 L632.9 394.8 L640.4 394.6 L647.9 394.4 L655.4 394.2 L663.0 393.8 L670.5 393.4 L678.0 392.9" stroke="#7a4216" stroke-width="0.7" fill="none" opacity="0.28"/><path d="M864.8 448.5 L872.6 448.2 L880.4 448.3 L888.2 448.6 L896.1 449.1 L903.9 449.3 L911.7 449.3 L919.6 449.0 L927.4 448.6 L935.2 448.4 L943.0 448.6 L950.9 449.0 L958.7 449.4 L966.5 449.6 L974.3 449.5 L982.2 449.1 L990.0 448.8" stroke="#7a4216" stroke-width="0.7" fill="none" opacity="0.41"/><path d="M517.9 471.0 L525.7 470.9 L533.4 470.8 L541.2 470.6 L549.0 470.5 L556.7 470.5 L564.5 470.6 L572.2 470.8 L580.0 471.1 L587.7 471.4 L595.5 471.7 L603.2 472.0 L611.0 472.2 L618.7 472.3 L626.5 472.2 L634.2 472.1 L642.0 472.0 L649.7 471.9 L657.5 471.8 L665.2 471.8 L673.0 471.9" stroke="#7a4216" stroke-width="0.8" fill="none" opacity="0.25"/><path d="M589.0 432.5 L596.6 433.0 L604.3 433.6 L611.9 433.4 L619.5 432.5 L627.2 431.8 L634.8 432.1 L642.5 432.8 L650.1 432.9 L657.8 432.1 L665.4 431.2 L673.0 431.3 L680.7 432.0" stroke="#7a4216" stroke-width="0.7" fill="none" opacity="0.39"/><path d="M385.0 419.6 L391.6 419.8 L398.2 419.8 L404.8 419.6 L411.3 419.4 L417.9 419.3" stroke="#7a4216" stroke-width="1.1" fill="none" opacity="0.50"/><path d="M887.5 415.5 L894.8 415.6 L902.1 415.8 L909.4 416.0 L916.8 416.3 L924.1 416.4 L931.4 416.5 L938.8 416.4 L946.1 416.3 L953.4 416.1 L960.8 415.9 L968.1 415.8" stroke="#7a4216" stroke-width="0.6" fill="none" opacity="0.54"/><path d="M895.2 455.0 L903.1 454.8 L911.0 454.7 L918.9 454.7 L926.8 454.9 L934.7 455.3 L942.6 455.6 L950.5 455.8 L958.4 455.9 L966.3 455.8 L974.2 455.6 L982.1 455.4 L990.0 455.4" stroke="#7a4216" stroke-width="1.2" fill="none" opacity="0.53"/><path d="M855.8 469.1 L863.4 469.8 L871.0 470.2 L878.5 470.1 L886.1 469.4 L893.7 468.5 L901.2 468.1 L908.8 468.3 L916.4 468.9 L923.9 469.5 L931.5 469.6 L939.1 469.1 L946.6 468.2 L954.2 467.6 L961.8 467.5" stroke="#7a4216" stroke-width="0.7" fill="none" opacity="0.38"/><path d="M422.9 437.9 L430.7 437.4 L438.4 437.0 L446.1 436.8 L453.8 436.8 L461.5 437.1 L469.2 437.5 L476.9 438.0 L484.6 438.4 L492.3 438.5 L500.0 438.4 L507.7 438.1 L515.4 437.6 L523.1 437.2 L530.8 436.9 L538.5 436.8 L546.2 437.0 L553.9 437.4 L561.6 437.9" stroke="#7a4216" stroke-width="0.6" fill="none" opacity="0.53"/><path d="M809.0 435.9 L816.9 435.6 L824.9 435.3 L832.8 435.2 L840.8 435.1 L848.7 435.1 L856.7 435.2 L864.6 435.2 L872.6 435.2 L880.5 435.2 L888.4 435.0 L896.4 434.7 L904.3 434.4" stroke="#7a4216" stroke-width="0.7" fill="none" opacity="0.34"/><path d="M797.6 454.2 L804.7 454.8 L811.8 455.2 L818.9 455.5 L825.9 455.4 L833.0 455.1 L840.1 454.7 L847.2 454.3 L854.3 454.3" stroke="#7a4216" stroke-width="1.1" fill="none" opacity="0.52"/><path d="M730.2 395.6 L737.8 395.6 L745.3 395.4 L752.9 395.1 L760.5 394.7 L768.0 394.2 L775.6 393.8 L783.2 393.3 L790.7 393.0 L798.3 392.8 L805.9 392.8 L813.5 392.8 L821.0 392.8 L828.6 392.8 L836.2 392.7 L843.7 392.4" stroke="#7a4216" stroke-width="1.0" fill="none" opacity="0.25"/><path d="M396.4 446.9 L403.6 446.7 L410.8 446.1 L418.0 445.6 L425.3 445.3 L432.5 445.5 L439.7 446.2 L446.9 446.9 L454.1 447.3 L461.3 447.3" stroke="#7a4216" stroke-width="0.9" fill="none" opacity="0.41"/><path d="M431.1 410.9 L438.8 409.5 L446.5 409.1 L454.2 410.0 L461.9 410.9 L469.6 410.7 L477.3 409.3 L485.0 408.4 L492.6 408.9 L500.3 410.0 L508.0 410.3 L515.7 409.2 L523.4 407.9 L531.1 407.9 L538.8 409.0 L546.5 409.7 L554.2 409.0 L561.9 407.6 L569.6 407.1 L577.3 407.9" stroke="#7a4216" stroke-width="1.2" fill="none" opacity="0.59"/><path d="M629.7 408.0 L636.9 407.7 L644.1 407.6 L651.3 407.5 L658.5 407.4 L665.7 407.2 L673.0 406.9 L680.2 406.5 L687.4 405.9 L694.6 405.3" stroke="#7a4216" stroke-width="1.0" fill="none" opacity="0.58"/><path d="M439.6 432.9 L447.2 433.2 L454.7 433.9 L462.3 434.8 L469.9 435.3 L477.5 435.1 L485.1 434.5 L492.7 434.0 L500.3 433.9 L507.9 434.5 L515.5 435.4 L523.1 436.1 L530.6 436.2 L538.2 435.7 L545.8 435.1 L553.4 434.8 L561.0 435.1 L568.6 436.0 L576.2 436.8" stroke="#7a4216" stroke-width="0.9" fill="none" opacity="0.26"/><path d="M362.2 429.6 L370.0 429.8 L377.8 429.9 L385.6 429.7 L393.5 429.4 L401.3 428.9 L409.1 428.6 L416.9 428.5 L424.8 428.6 L432.6 428.7 L440.4 428.9 L448.2 428.8 L456.1 428.5" stroke="#7a4216" stroke-width="1.2" fill="none" opacity="0.25"/><path d="M810.4 396.8 L818.2 396.7 L825.9 396.9 L833.6 397.1 L841.3 397.3 L849.1 397.4 L856.8 397.4 L864.5 397.1 L872.3 396.7 L880.0 396.1 L887.7 395.4 L895.4 394.8 L903.2 394.4 L910.9 394.1 L918.6 394.0 L926.3 394.1 L934.1 394.3 L941.8 394.5 L949.5 394.7" stroke="#7a4216" stroke-width="0.9" fill="none" opacity="0.39"/><path d="M959.3 418.6 L967.0 417.6 L974.6 417.1 L982.3 417.0 L990.0 416.7" stroke="#7a4216" stroke-width="1.2" fill="none" opacity="0.35"/><path d="M921.4 410.0 L929.2 409.9 L937.0 409.9 L944.8 410.1 L952.6 410.6 L960.4 411.2 L968.2 411.7 L976.0 412.1 L983.8 412.2" stroke="#7a4216" stroke-width="1.2" fill="none" opacity="0.53"/><path d="M738.5 471.8 L746.4 471.2 L754.2 471.8 L762.0 473.0 L769.9 473.7 L777.7 473.4 L785.5 472.6 L793.3 472.5 L801.2 473.5 L809.0 474.6 L816.8 474.9 L824.7 474.2 L832.5 473.6 L840.3 474.0 L848.1 475.2 L856.0 476.1 L863.8 475.8 L871.6 475.0 L879.5 474.8 L887.3 475.7" stroke="#7a4216" stroke-width="0.9" fill="none" opacity="0.51"/><path d="M746.7 392.8 L754.2 392.6 L761.6 392.3 L769.1 391.8 L776.6 391.3 L784.0 390.8 L791.5 390.5 L799.0 390.3 L806.4 390.3 L813.9 390.3" stroke="#7a4216" stroke-width="0.8" fill="none" opacity="0.51"/><path d="M945.8 448.5 L953.1 447.9 L960.5 447.1 L967.9 446.3 L975.3 445.8 L982.6 445.6 L990.0 445.7" stroke="#7a4216" stroke-width="0.7" fill="none" opacity="0.32"/><path d="M903.6 405.4 L911.4 404.4 L919.3 403.8 L927.1 403.8 L935.0 404.3 L942.9 404.8 L950.7 405.0 L958.6 404.7 L966.4 403.8 L974.3 402.7 L982.1 401.7 L990.0 401.1" stroke="#7a4216" stroke-width="0.7" fill="none" opacity="0.28"/><path d="M565.2 411.0 L572.1 411.3 L579.1 411.7 L586.1 412.2 L593.1 412.7 L600.0 413.2 L607.0 413.5" stroke="#7a4216" stroke-width="0.9" fill="none" opacity="0.39"/><path d="M674.5 419.4 L682.4 419.0 L690.3 418.4 L698.2 417.9 L706.1 417.4 L714.0 416.9 L721.9 416.6 L729.8 416.4 L737.7 416.3 L745.6 416.2 L753.5 416.2" stroke="#7a4216" stroke-width="1.0" fill="none" opacity="0.47"/><path d="M877.7 410.6 L885.0 410.5 L892.2 410.7 L899.5 411.1 L906.8 411.8 L914.0 412.4 L921.3 413.0 L928.5 413.3 L935.8 413.3" stroke="#7a4216" stroke-width="1.2" fill="none" opacity="0.56"/><path d="M373.1 448.6 L379.9 447.7 L386.8 446.9 L393.6 446.2 L400.4 445.8 L407.3 445.5" stroke="#7a4216" stroke-width="0.9" fill="none" opacity="0.57"/><path d="M855.4 477.2 L863.3 477.5 L871.2 477.5 L879.1 477.3 L887.0 477.2 L895.0 477.4 L902.9 477.9 L910.8 478.4 L918.7 478.6 L926.6 478.5 L934.6 478.3 L942.5 478.3 L950.4 478.7 L958.3 479.3 L966.2 479.6 L974.2 479.6 L982.1 479.3 L990.0 479.3" stroke="#7a4216" stroke-width="1.1" fill="none" opacity="0.58"/><path d="M793.0 456.8 L800.7 457.7 L808.3 457.9 L815.9 457.3 L823.5 456.9 L831.1 457.3 L838.7 458.3 L846.3 459.0 L853.9 458.8 L861.5 458.1 L869.1 458.0 L876.8 458.7 L884.4 459.7 L892.0 460.1 L899.6 459.6 L907.2 459.0" stroke="#7a4216" stroke-width="0.8" fill="none" opacity="0.57"/><path d="M747.3 398.8 L755.0 398.3 L762.7 398.0 L770.5 397.9 L778.2 398.0 L785.9 398.0 L793.6 397.9 L801.4 397.6 L809.1 397.1 L816.8 396.3" stroke="#7a4216" stroke-width="0.6" fill="none" opacity="0.43"/><path d="M709.7 408.9 L717.0 408.7 L724.4 408.4 L731.7 408.1 L739.0 407.8 L746.3 407.7 L753.6 407.7 L760.9 407.8 L768.2 407.9 L775.6 407.8 L782.9 407.5 L790.2 407.2" stroke="#7a4216" stroke-width="1.3" fill="none" opacity="0.48"/><path d="M890.3 408.4 L897.9 408.2 L905.6 407.6 L913.2 406.9 L920.9 406.1 L928.5 405.4 L936.2 404.9 L943.8 404.8 L951.5 405.0 L959.1 405.3 L966.8 405.7 L974.4 406.0 L982.1 406.1" stroke="#7a4216" stroke-width="0.6" fill="none" opacity="0.42"/><path d="M764.7 411.8 L772.4 410.6 L780.1 409.4 L787.8 408.7 L795.4 408.8 L803.1 409.4 L810.8 409.8 L818.5 409.5 L826.2 408.5 L833.9 407.2 L841.6 406.3 L849.3 406.2" stroke="#7a4216" stroke-width="0.8" fill="none" opacity="0.40"/><path d="M769.5 459.0 L777.5 460.2 L785.5 461.2 L793.4 461.7 L801.4 461.6 L809.4 461.5 L817.3 461.7 L825.3 462.6" stroke="#7a4216" stroke-width="0.8" fill="none" opacity="0.54"/><path d="M498.5 453.3 L505.8 453.8 L513.2 454.2 L520.5 454.2 L527.9 453.8 L535.2 453.1 L542.6 452.2 L549.9 451.5 L557.3 451.1" stroke="#7a4216" stroke-width="0.8" fill="none" opacity="0.40"/><path d="M759.2 401.2 L766.8 400.8 L774.5 400.4 L782.2 399.9 L789.8 399.6 L797.5 399.3 L805.2 399.1 L812.8 399.0 L820.5 399.0 L828.2 399.0 L835.8 398.9 L843.5 398.8 L851.2 398.6 L858.8 398.4 L866.5 398.0 L874.2 397.5 L881.8 397.1 L889.5 396.7 L897.2 396.3 L904.8 396.0 L912.5 395.8" stroke="#7a4216" stroke-width="0.6" fill="none" opacity="0.27"/><path d="M596.0 465.4 L603.7 465.0 L611.4 464.5 L619.2 464.1 L626.9 463.9 L634.6 463.8 L642.3 464.1 L650.1 464.5 L657.8 465.1 L665.5 465.7 L673.2 466.2 L681.0 466.5 L688.7 466.7 L696.4 466.5 L704.1 466.2 L711.9 465.7 L719.6 465.2 L727.3 464.9 L735.0 464.7 L742.8 464.7" stroke="#7a4216" stroke-width="0.7" fill="none" opacity="0.58"/><path d="M807.8 448.3 L814.6 448.1 L821.4 447.5 L828.3 446.8 L835.1 446.0 L841.9 445.4" stroke="#7a4216" stroke-width="0.6" fill="none" opacity="0.35"/><path d="M570.9 401.8 L578.6 401.8 L586.3 402.1 L594.0 402.4 L601.7 402.6 L609.4 402.5 L617.1 402.1 L624.9 401.7 L632.6 401.5 L640.3 401.4 L648.0 401.7 L655.7 402.0 L663.4 402.2 L671.1 402.2 L678.8 402.0 L686.5 401.6 L694.3 401.2 L702.0 401.1 L709.7 401.2 L717.4 401.5 L725.1 401.8" stroke="#7a4216" stroke-width="1.2" fill="none" opacity="0.40"/><path d="M389.6 423.5 L397.2 423.9 L404.8 424.4 L412.4 424.7 L420.1 424.8 L427.7 424.7 L435.3 424.5 L443.0 424.4 L450.6 424.5 L458.2 424.9 L465.8 425.4 L473.5 425.8 L481.1 426.1" stroke="#7a4216" stroke-width="0.6" fill="none" opacity="0.39"/><path d="M847.1 389.9 L854.7 389.7 L862.3 389.5 L870.0 389.1 L877.6 388.8 L885.2 388.4 L892.9 388.0 L900.5 387.6 L908.1 387.3 L915.7 387.0 L923.4 386.9 L931.0 386.8 L938.6 386.7 L946.3 386.6 L953.9 386.5 L961.5 386.3 L969.1 386.0 L976.8 385.6" stroke="#7a4216" stroke-width="1.1" fill="none" opacity="0.56"/><path d="M563.4 469.8 L570.7 470.1 L578.0 470.3 L585.2 470.6 L592.5 470.8 L599.8 470.8 L607.0 470.8 L614.3 470.6 L621.6 470.3 L628.8 470.1" stroke="#7a4216" stroke-width="0.8" fill="none" opacity="0.25"/><path d="M813.4 445.2 L821.2 445.0 L829.1 444.8 L836.9 444.8 L844.8 445.0 L852.6 445.3 L860.5 445.5 L868.3 445.5 L876.2 445.3 L884.0 445.0 L891.9 444.9 L899.7 445.1 L907.6 445.4 L915.4 445.6 L923.3 445.7 L931.1 445.5 L939.0 445.3 L946.8 445.1 L954.7 445.2 L962.5 445.5" stroke="#7a4216" stroke-width="1.3" fill="none" opacity="0.58"/><path d="M591.9 426.1 L599.7 426.4 L607.6 427.5 L615.4 428.6 L623.2 429.0 L631.1 428.6 L638.9 427.7 L646.7 427.4 L654.5 427.9" stroke="#7a4216" stroke-width="1.1" fill="none" opacity="0.54"/><path d="M823.7 416.7 L831.5 416.8 L839.2 416.7 L847.0 416.6 L854.8 416.2 L862.6 415.8 L870.4 415.2 L878.2 414.6 L885.9 414.2 L893.7 413.8 L901.5 413.7 L909.3 413.6 L917.1 413.7 L924.8 413.7 L932.6 413.7" stroke="#7a4216" stroke-width="0.7" fill="none" opacity="0.51"/><path d="M508.4 396.8 L516.1 397.1 L523.8 397.3 L531.4 397.3 L539.1 397.4 L546.8 397.4" stroke="#7a4216" stroke-width="1.3" fill="none" opacity="0.34"/><path d="M410.4 433.0 L417.5 433.4 L424.6 433.6 L431.7 433.4 L438.8 432.8 L445.9 432.2 L453.0 431.8" stroke="#7a4216" stroke-width="1.0" fill="none" opacity="0.49"/><path d="M808.8 448.0 L816.6 447.2 L824.4 446.9 L832.1 447.1 L839.9 447.9 L847.7 448.8 L855.5 449.2 L863.3 449.0 L871.1 448.3 L878.8 447.6 L886.6 447.4 L894.4 447.8 L902.2 448.6 L910.0 449.5 L917.8 449.8 L925.5 449.4 L933.3 448.7 L941.1 448.1 L948.9 447.9" stroke="#7a4216" stroke-width="0.9" fill="none" opacity="0.51"/><path d="M479.5 414.0 L487.3 414.1 L495.1 413.9 L502.8 413.3 L510.6 412.4 L518.4 411.6 L526.1 410.9 L533.9 410.7 L541.7 410.8" stroke="#7a4216" stroke-width="0.9" fill="none" opacity="0.60"/><path d="M664.4 458.1 L671.9 458.6 L679.4 459.8 L686.9 460.7 L694.4 460.5 L701.9 459.4 L709.5 458.6 L717.0 458.8 L724.5 459.9" stroke="#7a4216" stroke-width="1.2" fill="none" opacity="0.54"/><path d="M908.6 412.6 L915.7 412.5 L922.7 412.3 L929.8 412.3 L936.8 412.3 L943.9 412.4" stroke="#7a4216" stroke-width="1.3" fill="none" opacity="0.38"/><path d="M879.7 410.8 L887.0 409.9 L894.4 408.8 L901.8 408.5 L909.1 409.2 L916.5 410.2 L923.9 410.7 L931.2 410.1 L938.6 409.0 L946.0 408.3 L953.3 408.6 L960.7 409.6 L968.1 410.4" stroke="#7a4216" stroke-width="1.0" fill="none" opacity="0.33"/><path d="M581.2 408.9 L588.1 408.9 L595.0 408.8 L602.0 408.4 L608.9 407.9 L615.8 407.2 L622.7 406.4 L629.6 405.7" stroke="#7a4216" stroke-width="0.6" fill="none" opacity="0.36"/><path d="M767.0 415.7 L774.7 415.9 L782.4 415.8 L790.2 415.4 L797.9 414.7 L805.6 413.7 L813.3 412.6 L821.1 411.7" stroke="#7a4216" stroke-width="0.7" fill="none" opacity="0.39"/><path d="M690.1 398.2 L697.6 397.9 L705.2 397.3 L712.7 396.4 L720.2 395.7 L727.8 395.2 L735.3 395.2 L742.9 395.6 L750.4 395.9 L757.9 396.1 L765.5 395.9 L773.0 395.3 L780.6 394.4 L788.1 393.6 L795.6 393.2 L803.2 393.1" stroke="#7a4216" stroke-width="0.8" fill="none" opacity="0.58"/><path d="M547.4 422.1 L555.4 421.5 L563.4 420.9 L571.3 420.4 L579.3 420.0 L587.3 419.8 L595.3 419.8 L603.2 420.1 L611.2 420.4 L619.2 420.7 L627.1 421.0 L635.1 421.2 L643.1 421.1 L651.1 420.8" stroke="#7a4216" stroke-width="0.7" fill="none" opacity="0.50"/><path d="M482.2 464.6 L489.9 464.6 L497.6 464.8 L505.3 465.5 L513.0 466.7" stroke="#7a4216" stroke-width="0.9" fill="none" opacity="0.31"/><path d="M368.9 443.9 L376.7 443.7 L384.5 443.5 L392.4 443.2 L400.2 443.1 L408.0 443.1 L415.8 443.1 L423.7 443.3 L431.5 443.5 L439.3 443.7 L447.1 443.7 L455.0 443.6 L462.8 443.4 L470.6 443.1" stroke="#7a4216" stroke-width="1.0" fill="none" opacity="0.30"/><path d="M530.0 466.6 L537.5 466.7 L545.0 467.0 L552.5 467.5 L560.1 468.1 L567.6 468.8 L575.1 469.5 L582.6 470.1 L590.1 470.5 L597.7 470.8 L605.2 471.0 L612.7 471.0 L620.2 471.0 L627.7 471.0" stroke="#7a4216" stroke-width="0.7" fill="none" opacity="0.29"/><path d="M925.8 429.8 L933.0 430.7 L940.1 431.7 L947.2 432.5 L954.4 433.0 L961.5 433.0 L968.6 432.6 L975.7 432.1 L982.9 431.8 L990.0 432.0" stroke="#7a4216" stroke-width="1.0" fill="none" opacity="0.54"/><path d="M456.2 412.2 L463.9 412.4 L471.7 412.4 L479.5 412.2 L487.3 411.7 L495.0 411.1 L502.8 410.3 L510.6 409.6 L518.4 409.1 L526.1 408.8 L533.9 408.8 L541.7 409.0 L549.5 409.3 L557.2 409.5 L565.0 409.7 L572.8 409.6 L580.5 409.3 L588.3 408.8" stroke="#7a4216" stroke-width="0.8" fill="none" opacity="0.39"/><path d="M670.7 399.5 L678.7 399.2 L686.7 399.2 L694.7 399.2 L702.7 399.2 L710.7 399.1 L718.7 398.9 L726.6 398.4 L734.6 397.7 L742.6 396.9 L750.6 396.0" stroke="#7a4216" stroke-width="1.0" fill="none" opacity="0.52"/><path d="M382.9 405.8 L390.6 405.7 L398.3 405.4 L406.0 404.8 L413.8 404.2 L421.5 403.5 L429.2 403.1 L436.9 402.9 L444.6 403.0 L452.4 403.2 L460.1 403.5 L467.8 403.6 L475.5 403.5 L483.2 403.1 L491.0 402.5 L498.7 401.9 L506.4 401.3 L514.1 400.9 L521.8 400.7" stroke="#7a4216" stroke-width="0.9" fill="none" opacity="0.45"/><path d="M615.4 428.2 L623.2 428.3 L630.9 428.4 L638.6 428.6 L646.3 428.6 L654.0 428.6 L661.7 428.5 L669.4 428.3 L677.1 428.1 L684.8 427.9 L692.5 427.8 L700.3 427.8 L708.0 428.0 L715.7 428.1 L723.4 428.2 L731.1 428.3" stroke="#7a4216" stroke-width="0.8" fill="none" opacity="0.52"/><path d="M828.0 403.2 L835.4 402.7 L842.9 402.3 L850.4 402.1 L857.8 402.2 L865.3 402.4 L872.8 402.4 L880.2 402.0 L887.7 401.5 L895.2 401.2 L902.6 401.2 L910.1 401.4 L917.6 401.5" stroke="#7a4216" stroke-width="0.7" fill="none" opacity="0.40"/></g>
<clipPath id="hclip"><path d="M372 395C380.0 394.4 402.7 395.8 420.0 396.5C437.3 397.2 451.8 397.8 476.0 398.0C500.2 398.2 535.3 398.4 565.0 397.5C594.7 396.6 619.5 394.0 654.0 392.5C688.5 391.0 732.5 389.8 772.0 388.5C811.5 387.2 858.5 386.2 891.0 385.0C923.5 383.8 954.3 382.1 967.0 381.5C970.2 382.2 982.0 379.9 986.5 385.6C991.0 391.3 992.8 403.4 993.7 415.5C994.6 427.6 994.3 447.0 992.0 458.0C989.7 469.0 985.5 477.3 980.0 481.6C974.5 485.9 962.2 483.4 958.7 483.7C947.4 483.1 922.1 481.6 891.0 480.0C859.9 478.4 811.5 475.5 772.0 474.0C732.5 472.5 693.5 471.9 654.0 471.0C614.5 470.1 570.7 468.7 535.0 468.5C499.3 468.3 467.2 469.5 440.0 470.0C412.8 470.5 383.3 471.2 372.0 471.5Z"/></clipPath>
<path d="M372 395C380.0 394.4 402.7 395.8 420.0 396.5C437.3 397.2 451.8 397.8 476.0 398.0C500.2 398.2 535.3 398.4 565.0 397.5C594.7 396.6 619.5 394.0 654.0 392.5C688.5 391.0 732.5 389.8 772.0 388.5C811.5 387.2 858.5 386.2 891.0 385.0C923.5 383.8 954.3 382.1 967.0 381.5C970.2 382.2 982.0 379.9 986.5 385.6C991.0 391.3 992.8 403.4 993.7 415.5C994.6 427.6 994.3 447.0 992.0 458.0C989.7 469.0 985.5 477.3 980.0 481.6C974.5 485.9 962.2 483.4 958.7 483.7C947.4 483.1 922.1 481.6 891.0 480.0C859.9 478.4 811.5 475.5 772.0 474.0C732.5 472.5 693.5 471.9 654.0 471.0C614.5 470.1 570.7 468.7 535.0 468.5C499.3 468.3 467.2 469.5 440.0 470.0C412.8 470.5 383.3 471.2 372.0 471.5Z" fill="url(#capg)"/>
<rect x="378" y="390" width="14" height="86" fill="#5a3a20" opacity="0.25" clip-path="url(#hclip)"/>
<path d="M396 249C390.4 250.4 373.8 253.2 362.7 257.5C351.6 261.8 340.2 267.3 329.5 275.0C318.8 282.7 308.2 292.8 298.7 303.5C289.2 314.2 279.7 327.5 272.6 339.0C265.5 350.5 259.9 361.4 256.0 372.5C252.1 383.6 250.6 394.6 249.0 405.9C247.4 417.1 247.0 429.8 246.6 440.0C246.2 450.2 246.5 462.5 246.5 467.0L246.5 467C250 478 262 492 264 515C264 533 254 545 252.5 552L252.5 591Q252.5 597.5 259 597.5L330 596.5Q336 596 336 590L336 552C332 545 321 532 321 510C321 490 332 478 352 474L379 471L378 391L374 390C355 388 335 386 326 383C318 379 314 371 314.5 362C315 350 322 338 330 328C345 310 375 288 396 276C401 273 402 266 400.6 264C400 258 399 251 396 249Z" fill="url(#metal)"/>

<clipPath id="mclip"><path d="M396 249C390.4 250.4 373.8 253.2 362.7 257.5C351.6 261.8 340.2 267.3 329.5 275.0C318.8 282.7 308.2 292.8 298.7 303.5C289.2 314.2 279.7 327.5 272.6 339.0C265.5 350.5 259.9 361.4 256.0 372.5C252.1 383.6 250.6 394.6 249.0 405.9C247.4 417.1 247.0 429.8 246.6 440.0C246.2 450.2 246.5 462.5 246.5 467.0L246.5 467C250 478 262 492 264 515C264 533 254 545 252.5 552L252.5 591Q252.5 597.5 259 597.5L330 596.5Q336 596 336 590L336 552C332 545 321 532 321 510C321 490 332 478 352 474L379 471L378 391L374 390C355 388 335 386 326 383C318 379 314 371 314.5 362C315 350 322 338 330 328C345 310 375 288 396 276C401 273 402 266 400.6 264C400 258 399 251 396 249Z"/></clipPath>
<g clip-path="url(#mclip)">
<mask id="cmask" maskUnits="userSpaceOnUse" x="240" y="240" width="200" height="160"><rect x="240" y="240" width="200" height="160" fill="url(#cfade)"/></mask>
<linearGradient id="cfade" x1="0" y1="330" x2="0" y2="395" gradientUnits="userSpaceOnUse"><stop offset="0" stop-color="#fff"/><stop offset="1" stop-color="#000"/></linearGradient>
<rect x="240" y="240" width="200" height="160" fill="url(#clawg)" mask="url(#cmask)"/>
<path d="M318 381 C340 386 360 389 380 391" stroke="#3e3d39" stroke-width="2" fill="none" opacity="0.7"/>
<path d="M403 269 C385 278 355 295 336 318 C322 336 315 354 318 370 C323 384 345 390 380 393" stroke="#5c5b56" stroke-width="10" fill="none" opacity="0.85"/>
<path d="M401 263 C383 272 350 290 330 316 C316 334 309 354 311 370 C313 380 320 384 330 386" stroke="#3a3936" stroke-width="2" fill="none" opacity="0.8"/>
<path d="M399 256 C380 265 352 278 332 300" stroke="#5a5853" stroke-width="1.2" fill="none"/>
<path d="M300 385 L380 385 L380 471 C350 474 335 476 320 478 L300 478 Z" fill="url(#blk)"/>
<path d="M250 552 H340 V600 H250 Z" fill="url(#facel)"/>
<path d="M252 551 L336 551" stroke="#5a5954" stroke-width="2" opacity="0.6"/>
<path d="M254 555 L334 555" stroke="#b0aea7" stroke-width="1.5" opacity="0.35"/>
<path d="M252 594 Q290 599 336 593" stroke="#55544f" stroke-width="2.5" fill="none" opacity="0.45"/>
<path d="M356 476 C334 480 324 492 323 510 C323 530 330 545 336 552" stroke="#4a4944" stroke-width="7" fill="none" opacity="0.35"/>
<path d="M250 472 C262 490 266 505 265 520 C265 535 256 545 254 552" stroke="#4a4944" stroke-width="6" fill="none" opacity="0.3"/>
</g>
<path d="M225 432.5H265M245.5 412V452" stroke="#ff3030" stroke-opacity="0.45" stroke-width="1"/>
<circle cx="245.5" cy="432.5" r="5" stroke="#ff3030" stroke-opacity="0.5" fill="none"/>
<g fill="#0000b0" stroke="#9090b8" stroke-width="1">
<rect x="191.5" y="240.5" width="10" height="10"/><rect x="993.5" y="176.5" width="10" height="10"/><rect x="1024.5" y="561.5" width="10" height="10"/><rect x="222" y="625.5" width="10" height="10"/>
</g>
</svg>
<div id="vscroll" class="a"></div>
<div class="a" style="left:1123px;top:330px;width:8px;height:261px;border-radius:4px;background:#7f7f7f"></div>
<div id="hscroll" class="a"></div>
<div class="a" style="left:72px;top:746px;width:1061px;height:2px;background:#ececec"></div>
<div class="a" style="left:275px;top:736px;width:602px;height:8px;border-radius:4px;background:#7f7f7f"></div>
<div id="zoomlbl" class="a">10 &lt; 100</div>
<div id="hist" class="a"></div>
<div class="a" style="left:77px;top:750px;font-size:13.3px;line-height:16px;color:#1c1cd0;white-space:nowrap"><i>Command:</i> gp</div>
<div class="a" style="left:1119px;top:750px;width:1px;height:20px;background:#e8e8e8"></div>
<div class="a" style="left:1122px;top:750px;width:9px;height:17px;border-radius:4.5px;background:#7f7f7f"></div>
<div id="cmd" class="a"></div>
<div class="a" style="left:73px;top:778px;font-size:13.3px;line-height:16px;color:#111;white-space:nowrap">Command:</div>
<div class="a" style="left:142px;top:776px;width:965px;height:18px;background:#fff"></div>
<div class="a" style="left:72px;top:796px;width:1061px;height:2px;background:#d4d4d4"></div>
<svg class="a" style="left:1107px;top:772px" width="27" height="26"><rect x="0.5" y="0.5" width="26" height="25" fill="#f0f0f0" stroke="#a8a8a8"/><rect x="6.5" y="7.5" width="14" height="11" fill="#fff" stroke="#222"/><rect x="6" y="7" width="15" height="3" fill="#111"/></svg>
<div id="status" class="a"></div>
<div class="a" style="left:2px;top:806px;font-size:10.5px;line-height:12px;color:#222;white-space:nowrap">292,22.3333</div>
<div class="a" style="left:2px;top:826px;font-size:10.5px;line-height:12px;color:#222;white-space:nowrap">@292,22.3333</div>
<div class="a" style="left:254px;top:802px;width:1px;height:42px;background:#a8a8a8"></div>
<div class="a" style="left:256px;top:806px;font-size:10.5px;line-height:12px;color:#222;white-space:nowrap">292.8528&lt;4°</div>
<div class="a" style="left:256px;top:826px;font-size:10.5px;line-height:12px;color:#222;white-space:nowrap">@292.8528&lt;4°</div>
<div class="a" style="left:506px;top:819px;width:6px;height:6px;border-radius:3px;background:#c6c6c6"></div>
<svg class="a" style="left:716px;top:806px" width="20" height="30"><rect x="4.5" y="0.5" width="11" height="28" rx="5.5" fill="#fff" stroke="#333" stroke-width="0.9"/><path d="M4.5 11H15.5M10 1V11" stroke="#333" stroke-width="0.8"/><rect x="8.8" y="3" width="2.4" height="6" rx="1.2" fill="none" stroke="#333" stroke-width="0.7"/></svg>
<div class="a" style="left:940px;top:819px;width:6px;height:6px;border-radius:3px;background:#c6c6c6"></div>
<div class="a" style="left:949px;top:810px;font-size:10.5px;line-height:11px;color:#222;white-space:nowrap">Selected entities:<br>1 Image on Layer "Image".</div>
<div class="a" style="left:1269px;top:819px;width:6px;height:6px;border-radius:3px;background:#c6c6c6"></div>
<div id="rgap1" class="a"></div>
<div id="rgap2" class="a"></div>
<div class="a" style="left:1135px;top:354px;width:20px;height:115px;background:#1a84fb;border-radius:5px 0 0 5px"></div>
<div class="a" style="left:1135px;top:473px;width:20px;height:82px;background:#d6d6d6;border-radius:5px 0 0 5px"></div>
<div class="a" style="left:1137px;top:469px;width:111px;height:16px;transform-origin:0 0;transform:rotate(-90deg);font-size:13.3px;line-height:16px;color:#fff;text-align:center;white-space:nowrap">Property Editor</div>
<div class="a" style="left:1137px;top:555px;width:82px;height:16px;transform-origin:0 0;transform:rotate(-90deg);font-size:13.3px;line-height:16px;color:#222;text-align:center;white-space:nowrap">Layer List</div>
<div class="a" style="left:1155px;top:107px;width:300px;height:691px;background:#ececec;border-left:1px solid #d2d2d2;border-right:1px solid #d6d6d6"></div><div class="a" style="left:1156px;top:128px;width:298px;height:2px;background:#d4d4d4"></div><svg class="a" style="left:1155px;top:107px" width="40" height="24"><circle cx="9" cy="11" r="7" fill="#6b6b6b"/><path d="M6 8L12 14M12 8L6 14" stroke="#fff" stroke-width="1.8"/><circle cx="27" cy="11" r="7" fill="#6b6b6b"/><rect x="25" y="7.5" width="5" height="4" fill="none" stroke="#fff" stroke-width="1.1"/><rect x="23" y="10" width="5" height="4" fill="#6b6b6b" stroke="#fff" stroke-width="1.1"/></svg><div class="a t" style="left:1282px;top:112px;font-size:12px;color:#2a2a2a">Property Editor</div><div class="a" style="right:272px;top:147.0px;font-size:13.3px;line-height:15.3px;color:#1e1e1e;white-space:nowrap">Selection:</div><div class="a" style="left:1236px;top:144px;width:205px;height:20px;background:#fff;border:1px solid #d3d7dc;border-radius:6px;box-shadow:0 0.5px 0.5px rgba(0,0,0,0.08)"></div><div class="a" style="left:1240px;top:147.0px;font-size:13.3px;line-height:15.3px;color:#1e1e1e;white-space:nowrap">Image [1]</div><svg class="a" style="left:1423px;top:146px" width="16" height="16"><rect width="16" height="16" rx="4" fill="#0a7cff"/><path d="M5 7L8 4L11 7M5 9L8 12L11 9" stroke="#fff" stroke-width="1.3" fill="none"/></svg><div class="a" style="left:1175px;top:169.5px;font-size:11.6px;line-height:13.3px;color:#1e1e1e;white-space:nowrap">General Properties</div><div class="a" style="left:1168px;top:183px;width:274px;height:186px;background:#e3e3e3;border:1px solid #dcdcdc;border-radius:6px"></div><div class="a" style="right:232px;top:199.0px;font-size:13.3px;line-height:15.3px;color:#1e1e1e;white-space:nowrap">Layer:</div><div class="a" style="left:1272px;top:196px;width:132px;height:20px;background:#fff;border:1px solid #d3d7dc;border-radius:6px;box-shadow:0 0.5px 0.5px rgba(0,0,0,0.08)"></div><div class="a" style="left:1296px;top:199.0px;font-size:13.3px;line-height:15.3px;color:#1e1e1e;white-space:nowrap">Image</div><svg class="a" style="left:1386px;top:198px" width="16" height="16"><rect width="16" height="16" rx="4" fill="#0a7cff"/><path d="M5 7L8 4L11 7M5 9L8 12L11 9" stroke="#fff" stroke-width="1.3" fill="none"/></svg><div class="a" style="left:1275px;top:201px;width:16px;height:9px;background:#000"></div><svg class="a" style="left:1407px;top:193px" width="26" height="26"><defs><linearGradient id="lb" x1="0" y1="0" x2="0" y2="1"><stop offset="0" stop-color="#e6e6e6"/><stop offset="1" stop-color="#f4f4f4"/></linearGradient></defs><rect x="0.5" y="0.5" width="25" height="25" fill="url(#lb)" stroke="#9c9c9c"/><path d="M7 8.5H19M7 13H19M7 17.5H19" stroke="#777" stroke-width="2" stroke-linecap="round"/></svg><div class="a" style="right:232px;top:225.0px;font-size:13.3px;line-height:15.3px;color:#1e1e1e;white-space:nowrap">Color:</div><div class="a" style="left:1272px;top:222px;width:160px;height:20px;background:#fff;border:1px solid #d3d7dc;border-radius:6px;box-shadow:0 0.5px 0.5px rgba(0,0,0,0.08)"></div><div class="a" style="left:1296px;top:225.0px;font-size:13.3px;line-height:15.3px;color:#1e1e1e;white-space:nowrap">By Layer</div><svg class="a" style="left:1414px;top:224px" width="16" height="16"><rect width="16" height="16" rx="4" fill="#0a7cff"/><path d="M5 7L8 4L11 7M5 9L8 12L11 9" stroke="#fff" stroke-width="1.3" fill="none"/></svg><div class="a" style="left:1275px;top:227px;width:16px;height:10px;border:1px solid #222"></div><div class="a" style="right:232px;top:249.0px;font-size:13.3px;line-height:15.3px;color:#1e1e1e;white-space:nowrap">Lineweight:</div><div class="a" style="left:1272px;top:246px;width:160px;height:20px;background:#fff;border:1px solid #d3d7dc;border-radius:6px;box-shadow:0 0.5px 0.5px rgba(0,0,0,0.08)"></div><div class="a" style="left:1296px;top:249.0px;font-size:13.3px;line-height:15.3px;color:#1e1e1e;white-space:nowrap">By Layer</div><svg class="a" style="left:1414px;top:248px" width="16" height="16"><rect width="16" height="16" rx="4" fill="#0a7cff"/><path d="M5 7L8 4L11 7M5 9L8 12L11 9" stroke="#fff" stroke-width="1.3" fill="none"/></svg><div class="a" style="left:1275px;top:256px;width:16px;height:1px;background:#222"></div><div class="a" style="right:232px;top:272.0px;font-size:13.3px;line-height:15.3px;color:#1e1e1e;white-space:nowrap">Linetype:</div><div class="a" style="left:1272px;top:270px;width:160px;height:20px;background:#fff;border:1px solid #d3d7dc;border-radius:6px;box-shadow:0 0.5px 0.5px rgba(0,0,0,0.08)"></div><div class="a" style="left:1275px;top:273.0px;font-size:13.3px;line-height:15.3px;color:#1e1e1e;white-space:nowrap">By Layer</div><svg class="a" style="left:1414px;top:272px" width="16" height="16"><rect width="16" height="16" rx="4" fill="#0a7cff"/><path d="M5 7L8 4L11 7M5 9L8 12L11 9" stroke="#fff" stroke-width="1.3" fill="none"/></svg><div class="a" style="right:232px;top:296.0px;font-size:13.3px;line-height:15.3px;color:#1e1e1e;white-space:nowrap">Linetype Scale:</div><div class="a" style="left:1272px;top:294px;width:160px;height:20px;background:#fff;border-bottom:1px solid #c4c4c4"></div><div class="a" style="left:1274px;top:297.0px;font-size:13.3px;line-height:15.3px;color:#1e1e1e;white-space:nowrap">1</div><div class="a" style="right:232px;top:319.0px;font-size:13.3px;line-height:15.3px;color:#1e1e1e;white-space:nowrap">Draw Order:</div><div class="a" style="left:1272px;top:317px;width:160px;height:20px;background:#fff;border-bottom:1px solid #c4c4c4"></div><div class="a" style="left:1274px;top:320.0px;font-size:13.3px;line-height:15.3px;color:#1e1e1e;white-space:nowrap">0</div><div class="a" style="right:232px;top:342.0px;font-size:13.3px;line-height:15.3px;color:#1e1e1e;white-space:nowrap">Handle:</div><div class="a" style="left:1272px;top:340px;width:160px;height:20px;background:#fff;border-bottom:1px solid #c4c4c4"></div><div class="a" style="left:1274px;top:343.0px;font-size:13.3px;line-height:15.3px;color:#b4b4b4;white-space:nowrap">0x363</div><div class="a" style="left:1175px;top:374.5px;font-size:11.6px;line-height:13.3px;color:#1e1e1e;white-space:nowrap">Specific Properties</div><div class="a" style="left:1168px;top:387px;width:274px;height:242px;background:#e3e3e3;border:1px solid #dcdcdc;border-radius:6px"></div><div class="a" style="right:238px;top:400.0px;font-size:13.3px;line-height:15.3px;color:#1e1e1e;white-space:nowrap">Angle:</div><div class="a" style="left:1265px;top:398px;width:167px;height:20px;background:#fff;border-bottom:1px solid #c4c4c4"></div><div class="a" style="left:1267px;top:401.0px;font-size:13.3px;line-height:15.3px;color:#1e1e1e;white-space:nowrap">4.57593512</div><div class="a" style="right:238px;top:423.0px;font-size:13.3px;line-height:15.3px;color:#1e1e1e;white-space:nowrap">File:</div><div class="a" style="left:1265px;top:421px;width:167px;height:20px;background:#fff;border-bottom:1px solid #c4c4c4"></div><div class="a" style="left:1267px;top:424.0px;font-size:13.3px;line-height:15.3px;color:#1e1e1e;white-space:nowrap">Hammer.png</div><div class="a" style="right:238px;top:446.0px;font-size:13.3px;line-height:15.3px;color:#1e1e1e;white-space:nowrap">Width Factor:</div><div class="a" style="left:1265px;top:444px;width:167px;height:20px;background:#fff;border-bottom:1px solid #c4c4c4"></div><div class="a" style="left:1267px;top:447.0px;font-size:13.3px;line-height:15.3px;color:#1e1e1e;white-space:nowrap">0.19066545</div><div class="a" style="right:238px;top:469.0px;font-size:13.3px;line-height:15.3px;color:#1e1e1e;white-space:nowrap">Height Factor:</div><div class="a" style="left:1265px;top:467px;width:167px;height:20px;background:#fff;border-bottom:1px solid #c4c4c4"></div><div class="a" style="left:1267px;top:470.0px;font-size:13.3px;line-height:15.3px;color:#1e1e1e;white-space:nowrap">0.19066545</div><div class="a" style="right:238px;top:492.0px;font-size:13.3px;line-height:15.3px;color:#1e1e1e;white-space:nowrap">Width:</div><div class="a" style="left:1265px;top:490px;width:167px;height:20px;background:#fff;border-bottom:1px solid #c4c4c4"></div><div class="a" style="left:1267px;top:493.0px;font-size:13.3px;line-height:15.3px;color:#1e1e1e;white-space:nowrap">268.26628208</div><div class="a" style="right:238px;top:515.0px;font-size:13.3px;line-height:15.3px;color:#1e1e1e;white-space:nowrap">Height:</div><div class="a" style="left:1265px;top:513px;width:167px;height:20px;background:#fff;border-bottom:1px solid #c4c4c4"></div><div class="a" style="left:1267px;top:516.0px;font-size:13.3px;line-height:15.3px;color:#1e1e1e;white-space:nowrap">128.69917584</div><div class="a" style="right:238px;top:538.0px;font-size:13.3px;line-height:15.3px;color:#1e1e1e;white-space:nowrap">Fade:</div><div class="a" style="left:1265px;top:536px;width:167px;height:20px;background:#fdd8d8"></div><div class="a" style="left:1267px;top:539.0px;font-size:13.3px;line-height:15.3px;color:#1e1e1e;white-space:nowrap">0</div><svg class="a" style="left:1250px;top:525px" width="195" height="42"><path d="M5 10.5H190M5 31.5H190" stroke="#e85050" stroke-width="1" opacity="0.85"/><path d="M14.5 2V40M182.5 2V40" stroke="#e85050" stroke-width="1" opacity="0.85"/></svg><div class="a" style="left:1177px;top:559.0px;font-size:13.3px;line-height:15.3px;color:#1e1e1e;font-weight:bold;white-space:nowrap">Position</div><div class="a" style="right:238px;top:579.0px;font-size:13.3px;line-height:15.3px;color:#1e1e1e;white-space:nowrap">X:</div><div class="a" style="left:1265px;top:577px;width:167px;height:20px;background:#fff;border-bottom:1px solid #c4c4c4"></div><div class="a" style="left:1267px;top:580.0px;font-size:13.3px;line-height:15.3px;color:#1e1e1e;white-space:nowrap">-6.02275124</div><div class="a" style="right:238px;top:602.0px;font-size:13.3px;line-height:15.3px;color:#1e1e1e;white-space:nowrap">Y:</div><div class="a" style="left:1265px;top:600px;width:167px;height:20px;background:#fff;border-bottom:1px solid #c4c4c4"></div><div class="a" style="left:1267px;top:603.0px;font-size:13.3px;line-height:15.3px;color:#1e1e1e;white-space:nowrap">-66.1660044</div><div class="a" style="left:1175px;top:634.5px;font-size:11.6px;line-height:13.3px;color:#1e1e1e;white-space:nowrap">Custom</div><div class="a" style="left:1168px;top:647px;width:274px;height:53px;background:#e3e3e3;border:1px solid #dcdcdc;border-radius:6px"></div><svg class="a" style="left:1405px;top:663px" width="22" height="22"><rect x="0.5" y="0.5" width="21" height="21" fill="#f2f2f2" stroke="#a4a4a4"/><path d="M6.5 11H15.5M11 6.5V15.5" stroke="#d00000" stroke-width="2.4"/></svg><svg class="a" style="left:1300px;top:497px" width="96" height="96"><circle cx="48" cy="48" r="37" fill="none" stroke="#6f8fb0" stroke-opacity="0.45" stroke-width="5"/><circle cx="48" cy="48" r="37" fill="none" stroke="#5a7aa0" stroke-opacity="0.35" stroke-width="1.2"/><path d="M48 47.5V65L52.3 61L55.5 68.5L58.3 67.3L55.2 60L61 59.5Z" fill="#fff" stroke="#111" stroke-width="1.1" stroke-linejoin="round"/></svg>
<svg class="a" style="left:1455px;top:107px" width="45" height="691" viewBox="1455 107 45 691"><defs><linearGradient id="rbg" x1="0" y1="0" x2="1" y2="0"><stop offset="0" stop-color="#efefef"/><stop offset="0.55" stop-color="#e2e2e2"/><stop offset="1" stop-color="#c2c2c2"/></linearGradient></defs><rect x="1455" y="107" width="45" height="691" fill="url(#rbg)"/><rect x="1455" y="107" width="1" height="691" fill="#d8d8d8"/><path d="M1463 117H1492" stroke="#9a9a9a" stroke-width="2" stroke-dasharray="2 4"/><rect x="1456" y="120" width="44" height="42" rx="6" fill="#b6b6b6"/><g transform="translate(1463 127)"><rect x="0.5" y="0.5" width="27" height="27" fill="#fff" stroke="#444" stroke-width="1"/><rect x="0" y="0" width="28" height="4" fill="#000"/><rect x="1" y="1" width="3" height="3" fill="#fff"/><path d="M7 10L12 8V21L7 23Z" fill="#bbb" stroke="#555" stroke-width="0.7"/><path d="M10 9L20 6V19L10 22Z" fill="#eee" stroke="#555" stroke-width="0.7"/><path d="M13 19L18 10L17 19Z" fill="none" stroke="#e03030" stroke-width="0.8"/></g><g transform="translate(1463 174)"><rect x="0.5" y="0.5" width="27" height="27" fill="#fff" stroke="#444" stroke-width="1"/><rect x="0" y="0" width="28" height="4" fill="#000"/><rect x="1" y="1" width="3" height="3" fill="#fff"/><rect x="7" y="9" width="10" height="8" fill="#f4ecc8" stroke="#666" stroke-width="0.8"/><circle cx="16" cy="18" r="4.5" fill="#f4ecc8" stroke="#666" stroke-width="0.8"/></g><g transform="translate(1463 220)"><rect x="0.5" y="0.5" width="27" height="27" fill="#fff" stroke="#444" stroke-width="1"/><rect x="0" y="0" width="28" height="4" fill="#000"/><rect x="1" y="1" width="3" height="3" fill="#fff"/><rect x="6" y="9.5" width="17" height="11" rx="3" fill="#f4f4f4" stroke="#c0d0e8" stroke-width="0.8"/></g><path d="M1458 261.5H1500" stroke="#7a7a7a" stroke-width="1" stroke-dasharray="1 2.5"/><rect x="1456" y="269" width="44" height="43" rx="6" fill="#b6b6b6"/><g transform="translate(1463 276)"><rect x="0.5" y="0.5" width="27" height="27" fill="#fff" stroke="#444" stroke-width="1"/><rect x="0" y="0" width="28" height="4" fill="#000"/><rect x="1" y="1" width="3" height="3" fill="#fff"/><rect x="4" y="9" width="4" height="3" fill="#000"/><rect x="4" y="14" width="4" height="3" fill="#000"/><rect x="4" y="19" width="4" height="3" fill="#000"/><rect x="10.5" y="9.5" width="13" height="2.5" fill="none" stroke="#333" stroke-width="0.7"/><rect x="10.5" y="14.5" width="13" height="2.5" fill="none" stroke="#333" stroke-width="0.7"/><rect x="10.5" y="19.5" width="13" height="2.5" fill="none" stroke="#333" stroke-width="0.7"/></g><g transform="translate(1463 323)"><rect x="0.5" y="0.5" width="27" height="27" fill="#fff" stroke="#444" stroke-width="1"/><rect x="0" y="0" width="28" height="4" fill="#000"/><rect x="1" y="1" width="3" height="3" fill="#fff"/><path d="M8 9H20L15.5 15V22L12.5 20V15Z" fill="#aaa" stroke="#666" stroke-width="0.6"/></g><g transform="translate(1463 369)"><rect x="0.5" y="0.5" width="27" height="27" fill="#fff" stroke="#444" stroke-width="1"/><rect x="0" y="0" width="28" height="4" fill="#000"/><rect x="1" y="1" width="3" height="3" fill="#fff"/><path d="M6 9L11 12H18V19H11L6 22Z" fill="#eee" stroke="#555" stroke-width="0.8"/><rect x="13" y="12" width="7" height="7" fill="#888"/><path d="M4 15.5H24" stroke="#e05050" stroke-width="0.6" stroke-dasharray="1 1"/></g><path d="M1458 410.5H1500" stroke="#7a7a7a" stroke-width="1" stroke-dasharray="1 2.5"/><rect x="1456" y="418" width="44" height="43" rx="6" fill="#b6b6b6"/><g transform="translate(1463 425.5)"><rect x="0.5" y="0.5" width="27" height="27" fill="#fff" stroke="#444" stroke-width="1"/><rect x="0" y="0" width="28" height="4" fill="#000"/><rect x="1" y="1" width="3" height="3" fill="#fff"/><path d="M3 8H13M3 11H12M3 14H14M3 17H15" stroke="#888" stroke-width="0.8"/><path d="M0 23H28" stroke="#444" stroke-width="0.7"/><path d="M4 25.5H7M10 25.5H22" stroke="#555" stroke-width="0.8"/></g><g transform="translate(1463 472)"><rect x="0.5" y="0.5" width="27" height="27" fill="#fff" stroke="#444" stroke-width="1"/><rect x="0" y="0" width="28" height="4" fill="#000"/><rect x="1" y="1" width="3" height="3" fill="#fff"/><rect x="8" y="8" width="12" height="15" rx="1" fill="#b88440"/><rect x="9.5" y="10" width="9" height="11.5" fill="#f4f4f4"/><rect x="11" y="6.5" width="6" height="3" fill="#999"/></g><path d="M1458 513.5H1500" stroke="#7a7a7a" stroke-width="1" stroke-dasharray="1 2.5"/><path d="M1465 534.5H1470.5Q1474.7 534.5 1474.7 538.2Q1474.7 542 1470.5 542H1467.5M1470.5 542Q1474.7 542 1474.7 546.3Q1474.7 550.4 1470.5 550.4H1465M1478.6 533.8V550.2H1483.6Q1489.6 550.2 1489.6 542Q1489.6 533.8 1483.6 533.8Z" fill="none" stroke="#111" stroke-width="1.2"/></svg>
</body></html>
